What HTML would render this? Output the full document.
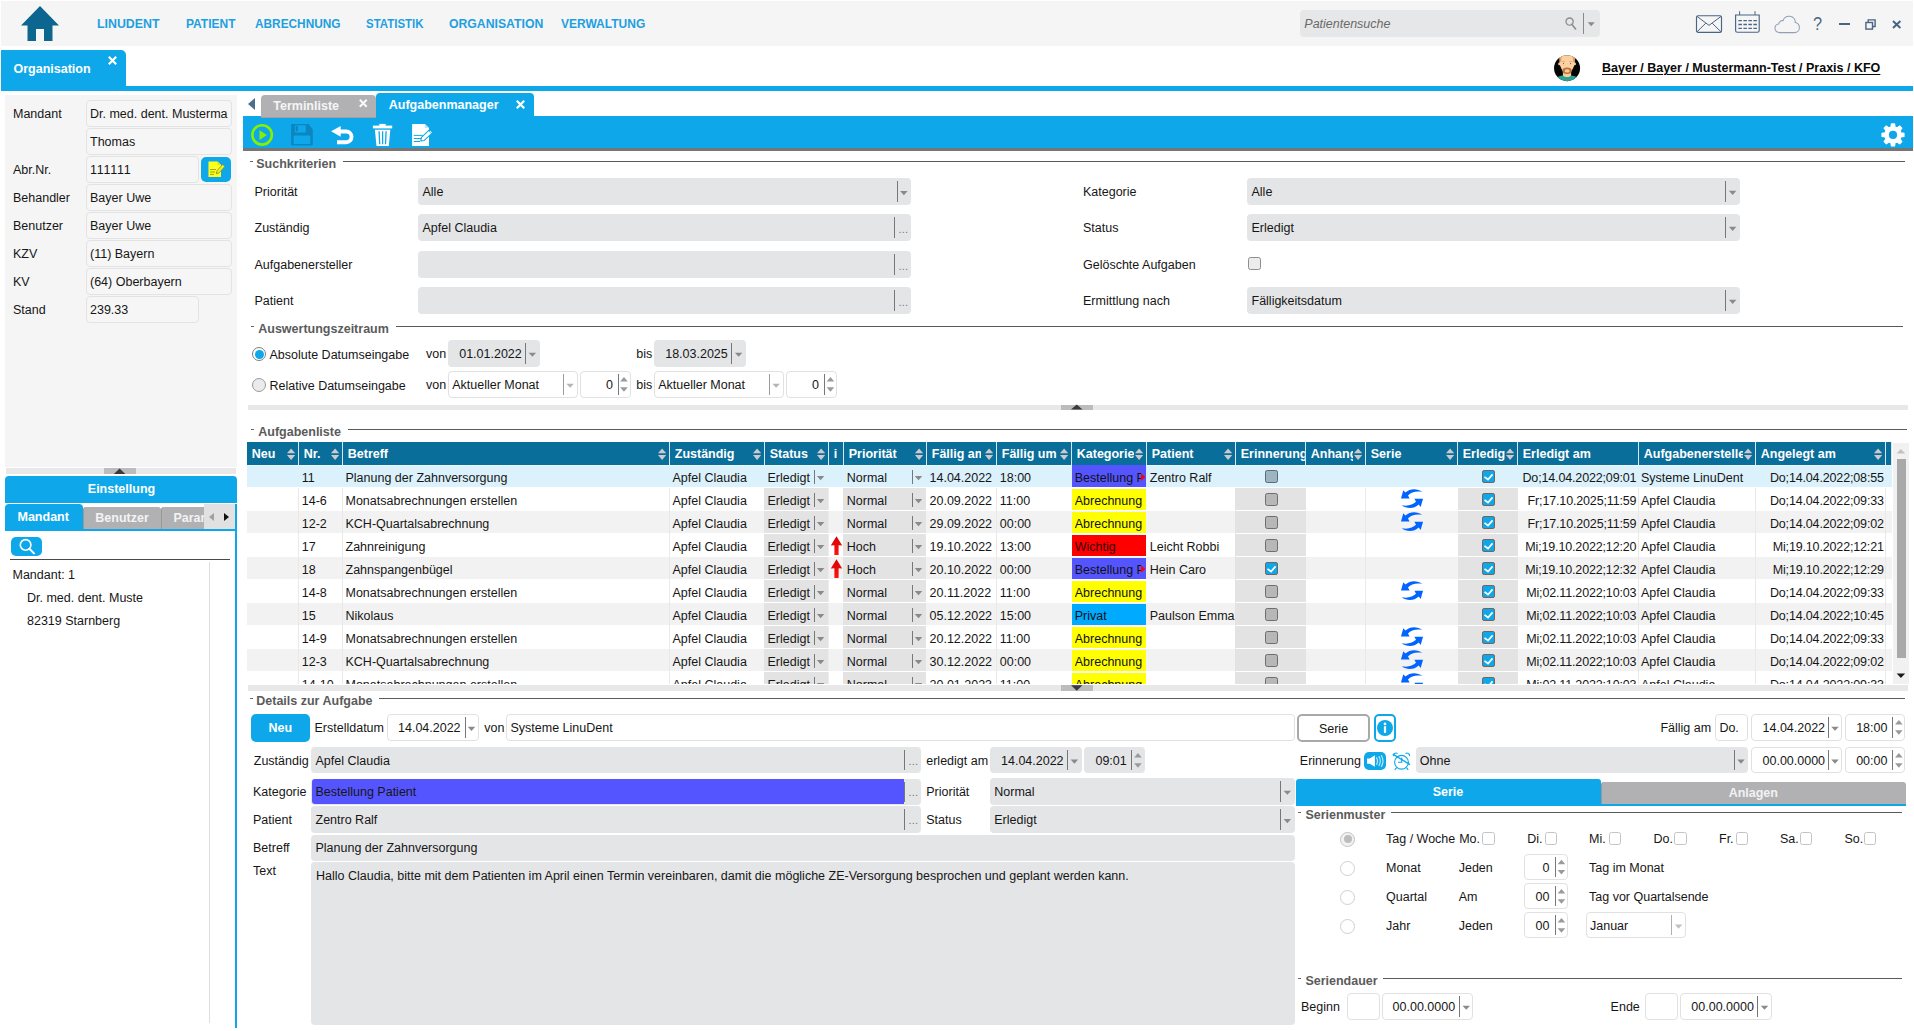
<!DOCTYPE html>
<html lang="de"><head><meta charset="utf-8"><title>LinuDent Aufgabenmanager</title><style>
html,body{margin:0;padding:0;background:#fff;}
body{width:1914px;height:1031px;position:relative;overflow:hidden;font-family:"Liberation Sans",sans-serif;font-size:12.5px;color:#161616;}
body div,body svg{position:absolute;}
.t{white-space:nowrap;line-height:16px;height:16px;}
.b{font-weight:700;}
.w{color:#fff;}
.sm{font-size:11px;font-weight:400;letter-spacing:0.2px;}
</style></head><body>
<div style="left:1px;top:1px;width:1911.5px;height:45px;background:#f5f5f5;"></div>
<svg style="left:21px;top:6px" width="38" height="35" viewBox="0 0 38 35"><path d="M19 0 L38 19.5 L31.5 19.5 L31.5 35 L23 35 L23 23 L15 23 L15 35 L6.5 35 L6.5 19.5 L0 19.5 Z" fill="#0d6690"/></svg>
<div class="t b" style="left:96.5px;top:16px;color:#1d9fe0;font-size:13px;transform-origin:0 0;transform:scaleX(0.951);">LINUDENT</div>
<div class="t b" style="left:185.5px;top:16px;color:#1d9fe0;font-size:13px;transform-origin:0 0;transform:scaleX(0.922);">PATIENT</div>
<div class="t b" style="left:254.5px;top:16px;color:#1d9fe0;font-size:13px;transform-origin:0 0;transform:scaleX(0.911);">ABRECHNUNG</div>
<div class="t b" style="left:365.7px;top:16px;color:#1d9fe0;font-size:13px;transform-origin:0 0;transform:scaleX(0.881);">STATISTIK</div>
<div class="t b" style="left:448.7px;top:16px;color:#1d9fe0;font-size:13px;transform-origin:0 0;transform:scaleX(0.941);">ORGANISATION</div>
<div class="t b" style="left:560.5px;top:16px;color:#1d9fe0;font-size:13px;transform-origin:0 0;transform:scaleX(0.923);">VERWALTUNG</div>
<div style="left:1300px;top:10px;width:299.5px;height:27px;background:#e6e7e8;border-radius:4px;"></div>
<div class="t " style="top:16px;left:1304.3px;font-style:italic;color:#6a6a6a;">Patientensuche</div>
<svg style="left:1565px;top:16.5px" width="12" height="13" viewBox="0 0 12 13"><circle cx="4.6" cy="4.6" r="3.6" fill="none" stroke="#8d8d8d" stroke-width="1.3"/><path d="M7 7.4 L10.6 12" stroke="#8d8d8d" stroke-width="1.6" stroke-linecap="round"/></svg>
<div style="left:1583px;top:13px;width:1px;height:20.5px;background:#8a8a8a;"></div>
<svg style="left:1587px;top:22px" width="8" height="5"><polygon points="0.70,0.30 7.70,0.30 4.20,4.30" fill="#8a8a8a"/></svg>
<svg style="left:1695px;top:14px" width="28" height="20" viewBox="0 0 28 20"><rect x="1.5" y="1.7" width="25" height="16.6" rx="1.6" fill="none" stroke="#4a6583" stroke-width="1.15"/><path d="M2 2.4 L14 11.4 L26 2.4 M2 17.8 L10.8 9.2 M26 17.8 L17.2 9.2" fill="none" stroke="#4a6583" stroke-width="1"/></svg>
<svg style="left:1734px;top:10px" width="27" height="24" viewBox="0 0 27 24"><path d="M1.6 5 H25.2 V20.4 Q25.2 22.2 23.4 22.2 H3.4 Q1.6 22.2 1.6 20.4 Z" fill="none" stroke="#4a6583" stroke-width="1.15"/><path d="M5.6 1.2 V5 M21 1.2 V5" stroke="#4a6583" stroke-width="1"/><path d="M4.4 10.6 H23 M4.4 14.5 H23 M4.4 18.4 H23" stroke="#4a6583" stroke-width="1.3" stroke-dasharray="3.5 1.5"/></svg>
<svg style="left:1774px;top:14.5px" width="27" height="19" viewBox="0 0 27 19"><path d="M6.2 17.6 C2.8 17.6 1 15.6 1 13.3 C1 10.9 2.9 9.3 4.7 9.1 C5 6.6 7 5.3 8.9 5.7 C10.1 2.6 13.1 1 16 1.3 C19.6 1.7 21.5 4.7 21.3 7.6 C23.8 8.2 25.4 10.3 25.4 12.7 C25.4 15.5 23.2 17.6 20.4 17.6 Z" fill="none" stroke="#8fa1b5" stroke-width="1.05"/></svg>
<div class="t" style="left:1812.5px;top:13px;color:#4a6583;font-size:18.5px;line-height:22px;height:22px;transform-origin:0 0;transform:scaleX(0.88);">?</div>
<div style="left:1839px;top:23px;width:10.5px;height:2px;background:#4a6583;"></div>
<svg style="left:1864.5px;top:18.5px" width="11" height="11" viewBox="0 0 11 11"><path d="M3.2 3 V0.9 H10.1 V7.5 H8" fill="none" stroke="#4a6583" stroke-width="1.4"/><rect x="0.9" y="3.5" width="6.6" height="6.6" fill="none" stroke="#4a6583" stroke-width="1.4"/></svg>
<svg style="left:1891.5px;top:19.5px" width="10" height="9" viewBox="0 0 10 9"><path d="M1 1 L8.4 8 M8.4 1 L1 8" stroke="#4a6583" stroke-width="2"/></svg>
<div style="left:1px;top:49.5px;width:124.5px;height:41.5px;background:#0ea8ea;border-radius:0 5px 0 0;"></div>
<div style="left:1px;top:86px;width:1912px;height:5px;background:#0ea8ea;"></div>
<div class="t b w" style="top:61px;left:13.5px;">Organisation</div>
<svg style="left:107.5px;top:56px" width="9" height="9" viewBox="0 0 9 9"><path d="M0.8 0.8 L8.2 8.2 M8.2 0.8 L0.8 8.2" stroke="#fff" stroke-width="2.2"/></svg>
<svg style="left:1550px;top:51px" width="34" height="34" viewBox="0 0 34 34"><defs><clipPath id="av"><circle cx="17.05" cy="17.15" r="13"/></clipPath></defs><g clip-path="url(#av)"><rect width="34" height="34" fill="#050505"/>
<path d="M5 31 V27.4 C8 25.4 10.5 24.6 13 24.4 H21 C23.5 24.6 26 25.4 29 27.4 V31 Z" fill="#2aa393"/>
<path d="M12.9 20 H21.1 V24.6 C19.5 26.6 14.5 26.6 12.9 24.6 Z" fill="#fbcd9a"/>
<circle cx="9.5" cy="12.9" r="1.35" fill="#f7c994"/><circle cx="24.7" cy="12.9" r="1.35" fill="#f7c994"/>
<path d="M9.6 3 H24.7 V11.6 C24.7 15.5 21.5 20.2 19.8 22 C18.4 23.3 15.8 23.3 14.4 22 C12.7 20.2 9.6 15.5 9.6 11.6 Z" fill="#fdd09d"/>
<path d="M9.6 3.6 H12.2 C11.4 6 11.3 8.6 11.2 10.8 H9.6 Z M24.7 3.6 H22.1 C22.9 6 23 8.6 23.1 10.8 H24.7 Z" fill="#dca060"/>
<path d="M10.6 15.5 C11.6 18.6 13.2 21 14.4 22 C15.8 23.3 18.4 23.3 19.8 22 C21 21 22.6 18.6 23.6 15.5 C22.6 18 21.6 19.2 20.4 20 H13.8 C12.6 19.2 11.6 18 10.6 15.5 Z" fill="#e9b078"/>
<ellipse cx="17.1" cy="19.7" rx="4.6" ry="3.3" fill="#b9753f"/><ellipse cx="17.1" cy="19.9" rx="2.5" ry="1.55" fill="#fbcd9a"/>
<path d="M12 10.6 H14.9 M19.3 10.6 H22.2" stroke="#cf9258" stroke-width="0.6"/>
<ellipse cx="13.5" cy="12.6" rx="1.25" ry="0.8" fill="#f3e6dc"/><ellipse cx="20.6" cy="12.6" rx="1.25" ry="0.8" fill="#f3e6dc"/>
<circle cx="13.5" cy="12.6" r="0.62" fill="#3b4b8c"/><circle cx="20.6" cy="12.6" r="0.62" fill="#3b4b8c"/>
</g></svg>
<div class="t b" style="top:60px;left:1602px;color:#0a0a0a;text-decoration:underline;text-decoration-thickness:1px;text-underline-offset:2px;">Bayer / Bayer / Mustermann-Test / Praxis / KFO</div>
<div style="left:5px;top:95px;width:232px;height:372px;background:#f5f5f5;"></div>
<div style="left:86px;top:100px;width:146px;height:27px;background:#f6f6f6;border:1px solid #e3e3e3;border-radius:4px;box-sizing:border-box;"></div>
<div class="t " style="top:106px;left:13px;">Mandant</div>
<div class="t " style="top:106px;left:90px;width:141px;overflow:hidden;">Dr. med. dent. Musterma</div>
<div style="left:86px;top:128px;width:146px;height:27px;background:#f6f6f6;border:1px solid #e3e3e3;border-radius:4px;box-sizing:border-box;"></div>
<div class="t " style="top:134px;left:90px;width:141px;overflow:hidden;">Thomas</div>
<div style="left:86px;top:156px;width:112.75px;height:27px;background:#f6f6f6;border:1px solid #e3e3e3;border-radius:4px;box-sizing:border-box;"></div>
<div class="t " style="top:162px;left:13px;">Abr.Nr.</div>
<div class="t " style="top:162px;left:90px;width:107.75px;overflow:hidden;letter-spacing:0.75px;">111111</div>
<div style="left:86px;top:184px;width:146px;height:27px;background:#f6f6f6;border:1px solid #e3e3e3;border-radius:4px;box-sizing:border-box;"></div>
<div class="t " style="top:190px;left:13px;">Behandler</div>
<div class="t " style="top:190px;left:90px;width:141px;overflow:hidden;">Bayer Uwe</div>
<div style="left:86px;top:212px;width:146px;height:27px;background:#f6f6f6;border:1px solid #e3e3e3;border-radius:4px;box-sizing:border-box;"></div>
<div class="t " style="top:218px;left:13px;">Benutzer</div>
<div class="t " style="top:218px;left:90px;width:141px;overflow:hidden;">Bayer Uwe</div>
<div style="left:86px;top:240px;width:146px;height:27px;background:#f6f6f6;border:1px solid #e3e3e3;border-radius:4px;box-sizing:border-box;"></div>
<div class="t " style="top:246px;left:13px;">KZV</div>
<div class="t " style="top:246px;left:90px;width:141px;overflow:hidden;">(11) Bayern</div>
<div style="left:86px;top:268px;width:146px;height:27px;background:#f6f6f6;border:1px solid #e3e3e3;border-radius:4px;box-sizing:border-box;"></div>
<div class="t " style="top:274px;left:13px;">KV</div>
<div class="t " style="top:274px;left:90px;width:141px;overflow:hidden;">(64) Oberbayern</div>
<div style="left:86px;top:296px;width:112.75px;height:27px;background:#f6f6f6;border:1px solid #e3e3e3;border-radius:4px;box-sizing:border-box;"></div>
<div class="t " style="top:302px;left:13px;">Stand</div>
<div class="t " style="top:302px;left:90px;width:107.75px;overflow:hidden;">239.33</div>
<div style="left:201.25px;top:157px;width:30px;height:25.25px;background:#0ea8ea;border-radius:5px;"></div>
<svg style="left:208px;top:161px" width="18" height="17" viewBox="0 0 18 17"><path d="M0.5 0.5 H9.5 L13 4 V16 H0.5 Z" fill="#ffff1e"/><path d="M9.5 0.5 V4 H13" fill="#e6e600"/><path d="M2 8.6 H8 M2 11 H7 M2 13.4 H6" stroke="#9aa51a" stroke-width="1"/><path d="M8.2 12.8 L9 9.8 L14.6 3.4 L16.8 5.4 L11.2 11.8 Z" fill="#f0f01a" stroke="#7d8f3a" stroke-width="0.8"/></svg>
<div style="left:6px;top:468.25px;width:230px;height:5.75px;background:#e8e8e8;"></div>
<div style="left:104px;top:468.25px;width:32px;height:5.75px;background:#bcbcbc;"></div>
<svg style="left:113px;top:468px" width="13" height="6"><polygon points="6.60,0.45 12.35,5.95 0.85,5.95" fill="#3a3a3a"/></svg>
<div style="left:5px;top:476px;width:232px;height:27px;background:#0ea8ea;border-radius:4px 4px 0 0;"></div>
<div class="t b w" style="top:481px;left:-78.5px;width:400px;text-align:center;">Einstellung</div>
<div style="left:5px;top:529px;width:232px;height:2px;background:#0ea8ea;"></div>
<div style="left:5px;top:504px;width:78px;height:27px;background:#0ea8ea;border-radius:4px 4px 0 0;"></div>
<div style="left:83px;top:507px;width:77.5px;height:22px;background:#b1b1b4;border-radius:3px 3px 0 0;border-left:1px solid #98989b;box-sizing:border-box;"></div>
<div style="left:161px;top:507px;width:74px;height:22px;background:#b1b1b4;border-radius:3px 3px 0 0;border-left:1px solid #98989b;box-sizing:border-box;"></div>
<div class="t b w" style="top:509px;left:17.5px;">Mandant</div>
<div class="t b" style="top:510px;left:95.3px;color:#f3f3f3;">Benutzer</div>
<div class="t b" style="top:510px;left:173.4px;width:31px;overflow:hidden;color:#f3f3f3;">Parameter</div>
<div style="left:204px;top:504px;width:31px;height:24.5px;background:#e1e1e1;"></div>
<div style="left:209px;top:512.5px;width:0;height:0;border-top:4.5px solid transparent;border-bottom:4.5px solid transparent;border-right:5.5px solid #a0a0a0;"></div>
<div style="left:223.5px;top:512.5px;width:0;height:0;border-top:4.5px solid transparent;border-bottom:4.5px solid transparent;border-left:5.5px solid #111;"></div>
<div style="left:235px;top:504px;width:2px;height:524px;background:#0ea8ea;"></div>
<div style="left:10.75px;top:537px;width:31.25px;height:19px;background:#0ea8ea;border-radius:5px;"></div>
<svg style="left:18px;top:538px" width="18" height="17" viewBox="0 0 18 17"><circle cx="7.6" cy="6.9" r="5.3" fill="none" stroke="#fff" stroke-width="1.6"/><path d="M11.4 10.8 L16 15.4" stroke="#fff" stroke-width="2" stroke-linecap="round"/></svg>
<div style="left:10px;top:559px;width:220px;height:1.2px;background:#4a4a4a;"></div>
<div style="left:209px;top:562px;width:1px;height:461px;background:#dedede;"></div>
<div class="t " style="top:567px;left:12.5px;">Mandant: 1</div>
<div class="t " style="top:590px;left:27px;">Dr. med. dent. Muste</div>
<div class="t " style="top:613px;left:27px;">82319 Starnberg</div>
<div style="left:248px;top:98px;width:0;height:0;border-top:6.4px solid transparent;border-bottom:6.4px solid transparent;border-right:7.5px solid #4d6d90;"></div>
<div style="left:375.75px;top:92.5px;width:157.75px;height:25px;background:#0ea8ea;border-radius:4px 4px 0 0;"></div>
<div class="t b w" style="top:97px;left:388.75px;">Aufgabenmanager</div>
<svg style="left:515.5px;top:99.5px" width="9" height="9" viewBox="0 0 9 9"><path d="M0.8 0.8 L8.2 8.2 M8.2 0.8 L0.8 8.2" stroke="#fff" stroke-width="2.2"/></svg>
<div style="left:243px;top:116px;width:1670px;height:32px;background:#0ea8ea;"></div>
<div style="left:243px;top:148px;width:1670px;height:3px;background:#767676;"></div>
<div style="left:261px;top:95px;width:115px;height:23px;background:#b1b1b4;border-radius:4px 4px 0 0;"></div>
<div style="left:261px;top:117px;width:115px;height:1px;background:#a2a2a5;"></div>
<div class="t b" style="top:98px;left:273.25px;color:#f5f5f5;">Terminliste</div>
<svg style="left:359px;top:99px" width="8.5" height="8.5" viewBox="0 0 8.5 8.5"><path d="M0.8 0.8 L7.7 7.7 M7.7 0.8 L0.8 7.7" stroke="#fafafa" stroke-width="2"/></svg>
<svg style="left:243px;top:114px" width="200" height="40" viewBox="0 0 200 40">
<circle cx="19.1" cy="20.9" r="9.7" fill="none" stroke="#86f000" stroke-width="2.6"/><path d="M16.5 16.2 L16.5 25.9 L23.9 21.05 Z" fill="#86f000"/>
<path d="M49.4 9.9 H65.6 L69.8 15.4 V30.3 Q69.8 31.6 68.5 31.6 H49.4 Q48.1 31.6 48.1 30.3 V11.2 Q48.1 9.9 49.4 9.9 Z" fill="#0c86c0"/>
<rect x="51.9" y="11.2" width="10.9" height="7.4" rx="0.8" fill="#0ea8ea"/><rect x="52.7" y="12" width="2.3" height="5.3" rx="0.8" fill="#0c86c0"/>
<rect x="50.6" y="21.4" width="16.7" height="8.5" rx="1" fill="#0ea8ea"/>
<path d="M88.1 17.3 L97.7 11.9 L97.7 22.7 Z" fill="#fff"/><path d="M97 17.5 H103.2 A5.35 5.35 0 0 1 103.2 28.2 H94" fill="none" stroke="#fff" stroke-width="3.9"/>
<rect x="129.9" y="11.6" width="19.3" height="2.8" fill="#fff"/><rect x="136.3" y="9.9" width="6.4" height="2" fill="#fff"/>
<path d="M131.9 15.7 H147.3 L145.8 31.9 H133.5 Z" fill="#fff"/>
<path d="M136.1 17.3 L136.7 30.3 M139.6 17.3 V30.3 M143.1 17.3 L142.5 30.3" stroke="#0ea8ea" stroke-width="1.3"/>
<path d="M169.1 9.9 H181.8 L186 14.1 V31.9 H169.1 Z" fill="#fff"/><path d="M181.8 9.9 V14.1 H186 Z" fill="#bfe6f8"/>
<path d="M170.8 21.4 H179.7 M170.8 24.5 H179 M170.8 27.5 H177" stroke="#0ea8ea" stroke-width="1"/>
<path d="M177.8 26.9 L178.42 23.35 L186.87 15.46 L189.73 18.54 L181.28 26.43 Z" fill="#fff" stroke="#0ea8ea" stroke-width="1.1" stroke-linejoin="round"/>
<path d="M185.55 16.69 L188.41 19.77" stroke="#0ea8ea" stroke-width="0.8"/>
</svg>
<svg style="left:1879px;top:121px" width="28" height="28" viewBox="0 0 28 28"><path d="M12.02 5.94 L12.44 2.91 L15.56 2.91 L15.98 5.94 L18.23 6.87 L20.66 5.02 L22.88 7.24 L21.03 9.67 L21.96 11.92 L24.99 12.34 L24.99 15.46 L21.96 15.88 L21.03 18.13 L22.88 20.56 L20.66 22.78 L18.23 20.93 L15.98 21.86 L15.56 24.89 L12.44 24.89 L12.02 21.86 L9.77 20.93 L7.34 22.78 L5.12 20.56 L6.97 18.13 L6.04 15.88 L3.01 15.46 L3.01 12.34 L6.04 11.92 L6.97 9.67 L5.12 7.24 L7.34 5.02 L9.77 6.87 Z" fill="#fff" stroke="#fff" stroke-width="1.2" stroke-linejoin="round"/><circle cx="14" cy="13.9" r="4.1" fill="#0ea8ea"/></svg>
<div style="left:249.5px;top:161.25px;width:3px;height:1px;background:#666;"></div>
<div class="t b" style="top:156px;left:256.25px;color:#5b5b5b;">Suchkriterien</div>
<div style="left:342.5px;top:161.25px;width:1562.2px;height:1.2px;background:#5a5a5a;"></div>
<div class="t " style="top:184px;left:254.5px;">Priorität</div>
<div style="left:418.25px;top:178.25px;width:493px;height:26.75px;background:#e4e5e7;border-radius:4px;"></div>
<div style="left:896.5px;top:181.25px;width:1px;height:20.75px;background:#777;"></div>
<svg style="left:900px;top:191px" width="8" height="5"><polygon points="0.12,0.03 7.62,0.03 3.88,4.23" fill="#8a8a8a"/></svg>
<div class="t " style="top:184px;left:422.5px;">Alle</div>
<div class="t " style="top:220px;left:254.5px;">Zuständig</div>
<div style="left:418.25px;top:214.25px;width:493px;height:26.75px;background:#e4e5e7;border-radius:4px;"></div>
<div style="left:894.25px;top:217.25px;width:1px;height:20.75px;background:#777;"></div>
<div class="t sm" style="top:221px;left:703.4px;width:400px;text-align:center;color:#777;">...</div>
<div class="t " style="top:220px;left:422.5px;">Apfel Claudia</div>
<div class="t " style="top:257px;left:254.5px;">Aufgabenersteller</div>
<div style="left:418.25px;top:251.25px;width:493px;height:26.75px;background:#e4e5e7;border-radius:4px;"></div>
<div style="left:894.25px;top:254.25px;width:1px;height:20.75px;background:#777;"></div>
<div class="t sm" style="top:258px;left:703.4px;width:400px;text-align:center;color:#777;">...</div>
<div class="t " style="top:293px;left:254.5px;">Patient</div>
<div style="left:418.25px;top:287px;width:493px;height:26.75px;background:#e4e5e7;border-radius:4px;"></div>
<div style="left:894.25px;top:290px;width:1px;height:20.75px;background:#777;"></div>
<div class="t sm" style="top:294px;left:703.4px;width:400px;text-align:center;color:#777;">...</div>
<div class="t " style="top:184px;left:1083px;">Kategorie</div>
<div style="left:1247.25px;top:178px;width:492.75px;height:26.75px;background:#e4e5e7;border-radius:4px;"></div>
<div style="left:1725.25px;top:181px;width:1px;height:20.75px;background:#777;"></div>
<svg style="left:1728px;top:190px" width="9" height="5"><polygon points="0.88,0.78 8.38,0.78 4.62,4.98" fill="#8a8a8a"/></svg>
<div class="t " style="top:184px;left:1251.5px;">Alle</div>
<div class="t " style="top:220px;left:1083px;">Status</div>
<div style="left:1247.25px;top:214px;width:492.75px;height:26.75px;background:#e4e5e7;border-radius:4px;"></div>
<div style="left:1725.25px;top:217px;width:1px;height:20.75px;background:#777;"></div>
<svg style="left:1728px;top:226px" width="9" height="5"><polygon points="0.88,0.78 8.38,0.78 4.62,4.98" fill="#8a8a8a"/></svg>
<div class="t " style="top:220px;left:1251.5px;">Erledigt</div>
<div class="t " style="top:293px;left:1083px;">Ermittlung nach</div>
<div style="left:1247.25px;top:287px;width:492.75px;height:26.75px;background:#e4e5e7;border-radius:4px;"></div>
<div style="left:1725.25px;top:290px;width:1px;height:20.75px;background:#777;"></div>
<svg style="left:1728px;top:299px" width="9" height="5"><polygon points="0.88,0.77 8.38,0.77 4.62,4.97" fill="#8a8a8a"/></svg>
<div class="t " style="top:293px;left:1251.5px;">Fälligkeitsdatum</div>
<div class="t " style="top:257px;left:1083px;">Gelöschte Aufgaben</div>
<div style="left:1248px;top:257px;width:13px;height:13px;background:#ececec;border:1px solid #8e8e8e;border-radius:2.5px;box-sizing:border-box;"></div>
<div style="left:251px;top:326px;width:3px;height:1px;background:#666;"></div>
<div class="t b" style="top:321px;left:258.25px;color:#5b5b5b;">Auswertungszeitraum</div>
<div style="left:395.5px;top:326px;width:1507.5px;height:1.2px;background:#5a5a5a;"></div>
<div style="left:252px;top:347px;width:14.25px;height:14.25px;background:#fff;border:1.2px solid #7d7d7d;border-radius:50%;box-sizing:border-box;"></div>
<div style="left:254.6px;top:349.6px;width:9px;height:9px;background:#0ea8ea;border-radius:50%;"></div>
<div class="t " style="top:347px;left:269.5px;">Absolute Datumseingabe</div>
<div class="t " style="top:346px;left:426px;">von</div>
<div style="left:448px;top:340px;width:91.75px;height:26.5px;background:#e4e5e7;border-radius:4px;"></div>
<div style="left:525px;top:343px;width:1px;height:20.5px;background:#777;"></div>
<svg style="left:528px;top:352px" width="9" height="5"><polygon points="0.62,0.65 8.12,0.65 4.38,4.85" fill="#8a8a8a"/></svg>
<div class="t " style="top:346px;left:459.2px;">01.01.2022</div>
<div class="t " style="top:346px;left:636.3px;">bis</div>
<div style="left:654px;top:340px;width:92px;height:26.5px;background:#e4e5e7;border-radius:4px;"></div>
<div style="left:731.25px;top:343px;width:1px;height:20.5px;background:#777;"></div>
<svg style="left:734px;top:352px" width="9" height="5"><polygon points="0.88,0.65 8.38,0.65 4.62,4.85" fill="#8a8a8a"/></svg>
<div class="t " style="top:346px;left:665.2px;">18.03.2025</div>
<div style="left:252px;top:378.2px;width:14.25px;height:14.25px;background:#ebebeb;border:1.2px solid #9a9a9a;border-radius:50%;box-sizing:border-box;"></div>
<div class="t " style="top:378px;left:269.5px;">Relative Datumseingabe</div>
<div class="t " style="top:377px;left:426px;">von</div>
<div style="left:448px;top:371px;width:129.5px;height:26.5px;background:#fff;border:1px solid #e1e1e1;border-radius:4px;box-sizing:border-box;"></div>
<div style="left:562.75px;top:374px;width:1px;height:20.5px;background:#9c9c9c;"></div>
<svg style="left:566px;top:383px" width="8" height="5"><polygon points="0.38,0.65 7.88,0.65 4.12,4.85" fill="#b5b5b5"/></svg>
<div class="t " style="top:377px;left:452.2px;">Aktueller Monat</div>
<div style="left:580px;top:371px;width:50.5px;height:26.5px;background:#fff;border:1px solid #e1e1e1;border-radius:4px;box-sizing:border-box;"></div>
<div style="left:617.5px;top:374px;width:1px;height:20.5px;background:#777;"></div>
<svg style="left:620px;top:377px" width="8" height="5"><polygon points="3.95,0.05 7.75,4.45 0.15,4.45" fill="#9a9a9a"/></svg>
<svg style="left:620px;top:387px" width="8" height="5"><polygon points="0.15,0.35 7.75,0.35 3.95,4.75" fill="#9a9a9a"/></svg>
<div class="t " style="top:377px;right:1301px;">0</div>
<div class="t " style="top:377px;left:636.3px;">bis</div>
<div style="left:654px;top:371px;width:129.5px;height:26.5px;background:#fff;border:1px solid #e1e1e1;border-radius:4px;box-sizing:border-box;"></div>
<div style="left:768.75px;top:374px;width:1px;height:20.5px;background:#9c9c9c;"></div>
<svg style="left:772px;top:383px" width="8" height="5"><polygon points="0.38,0.65 7.88,0.65 4.12,4.85" fill="#b5b5b5"/></svg>
<div class="t " style="top:377px;left:658.2px;">Aktueller Monat</div>
<div style="left:786px;top:371px;width:51px;height:26.5px;background:#fff;border:1px solid #e1e1e1;border-radius:4px;box-sizing:border-box;"></div>
<div style="left:824px;top:374px;width:1px;height:20.5px;background:#777;"></div>
<svg style="left:826px;top:377px" width="9" height="5"><polygon points="4.45,0.05 8.25,4.45 0.65,4.45" fill="#9a9a9a"/></svg>
<svg style="left:826px;top:387px" width="9" height="5"><polygon points="0.65,0.35 8.25,0.35 4.45,4.75" fill="#9a9a9a"/></svg>
<div class="t " style="top:377px;right:1095px;">0</div>
<div style="left:248px;top:404.5px;width:1660px;height:5px;background:#e8e8e8;"></div>
<div style="left:1061px;top:404.5px;width:32px;height:5px;background:#bcbcbc;"></div>
<svg style="left:1071px;top:404px" width="12" height="6"><polygon points="5.75,0.50 11.50,5.50 0.00,5.50" fill="#3a3a3a"/></svg>
<div style="left:251px;top:429px;width:3px;height:1px;background:#666;"></div>
<div class="t b" style="top:424px;left:258.25px;color:#5b5b5b;">Aufgabenliste</div>
<div style="left:347.5px;top:429px;width:1559.2px;height:1.2px;background:#5a5a5a;"></div>
<div class="tbl" style="left:247px;top:442px;width:1645px;height:242px;overflow:hidden;"><div style="left:0px;top:0px;width:1645px;height:23px;background:#d6e7ef;"></div><div style="left:0px;top:0px;width:51px;height:23px;background:#0a6e9b;"></div><div class="t b w" style="top:4px;left:4.75px;width:34px;overflow:hidden;">Neu</div><svg style="left:40px;top:6px" width="9" height="6"><polygon points="4.10,0.50 8.20,5.30 0.00,5.30" fill="#cbcbcb"/></svg><svg style="left:40px;top:13px" width="9" height="5"><polygon points="0.00,0.10 8.20,0.10 4.10,4.90" fill="#cbcbcb"/></svg><div style="left:52px;top:0px;width:43px;height:23px;background:#0a6e9b;"></div><div class="t b w" style="top:4px;left:56.75px;width:26px;overflow:hidden;">Nr.</div><svg style="left:84px;top:6px" width="9" height="6"><polygon points="4.10,0.50 8.20,5.30 0.00,5.30" fill="#cbcbcb"/></svg><svg style="left:84px;top:13px" width="9" height="5"><polygon points="0.00,0.10 8.20,0.10 4.10,4.90" fill="#cbcbcb"/></svg><div style="left:96px;top:0px;width:326px;height:23px;background:#0a6e9b;"></div><div class="t b w" style="top:4px;left:100.75px;width:309px;overflow:hidden;">Betreff</div><svg style="left:411px;top:6px" width="9" height="6"><polygon points="4.10,0.50 8.20,5.30 0.00,5.30" fill="#cbcbcb"/></svg><svg style="left:411px;top:13px" width="9" height="5"><polygon points="0.00,0.10 8.20,0.10 4.10,4.90" fill="#cbcbcb"/></svg><div style="left:423px;top:0px;width:94px;height:23px;background:#0a6e9b;"></div><div class="t b w" style="top:4px;left:427.75px;width:77px;overflow:hidden;">Zuständig</div><svg style="left:506px;top:6px" width="9" height="6"><polygon points="4.10,0.50 8.20,5.30 0.00,5.30" fill="#cbcbcb"/></svg><svg style="left:506px;top:13px" width="9" height="5"><polygon points="0.00,0.10 8.20,0.10 4.10,4.90" fill="#cbcbcb"/></svg><div style="left:518px;top:0px;width:63px;height:23px;background:#0a6e9b;"></div><div class="t b w" style="top:4px;left:522.75px;width:46px;overflow:hidden;">Status</div><svg style="left:570px;top:6px" width="9" height="6"><polygon points="4.10,0.50 8.20,5.30 0.00,5.30" fill="#cbcbcb"/></svg><svg style="left:570px;top:13px" width="9" height="5"><polygon points="0.00,0.10 8.20,0.10 4.10,4.90" fill="#cbcbcb"/></svg><div style="left:582px;top:0px;width:14px;height:23px;background:#0a6e9b;"></div><div class="t b w" style="top:4px;left:586.75px;">i</div><div style="left:597px;top:0px;width:82px;height:23px;background:#0a6e9b;"></div><div class="t b w" style="top:4px;left:601.75px;width:65px;overflow:hidden;">Priorität</div><svg style="left:668px;top:6px" width="9" height="6"><polygon points="4.10,0.50 8.20,5.30 0.00,5.30" fill="#cbcbcb"/></svg><svg style="left:668px;top:13px" width="9" height="5"><polygon points="0.00,0.10 8.20,0.10 4.10,4.90" fill="#cbcbcb"/></svg><div style="left:680px;top:0px;width:69px;height:23px;background:#0a6e9b;"></div><div class="t b w" style="top:4px;left:684.75px;width:49px;overflow:hidden;">Fällig am</div><svg style="left:738px;top:6px" width="9" height="6"><polygon points="4.10,0.50 8.20,5.30 0.00,5.30" fill="#cbcbcb"/></svg><svg style="left:738px;top:13px" width="9" height="5"><polygon points="0.00,0.10 8.20,0.10 4.10,4.90" fill="#cbcbcb"/></svg><div style="left:750px;top:0px;width:74px;height:23px;background:#0a6e9b;"></div><div class="t b w" style="top:4px;left:754.75px;width:57px;overflow:hidden;">Fällig um</div><svg style="left:813px;top:6px" width="9" height="6"><polygon points="4.10,0.50 8.20,5.30 0.00,5.30" fill="#cbcbcb"/></svg><svg style="left:813px;top:13px" width="9" height="5"><polygon points="0.00,0.10 8.20,0.10 4.10,4.90" fill="#cbcbcb"/></svg><div style="left:825px;top:0px;width:74px;height:23px;background:#0a6e9b;"></div><div class="t b w" style="top:4px;left:829.75px;width:57px;overflow:hidden;">Kategorie</div><svg style="left:888px;top:6px" width="9" height="6"><polygon points="4.10,0.50 8.20,5.30 0.00,5.30" fill="#cbcbcb"/></svg><svg style="left:888px;top:13px" width="9" height="5"><polygon points="0.00,0.10 8.20,0.10 4.10,4.90" fill="#cbcbcb"/></svg><div style="left:900px;top:0px;width:88px;height:23px;background:#0a6e9b;"></div><div class="t b w" style="top:4px;left:904.75px;width:71px;overflow:hidden;">Patient</div><svg style="left:977px;top:6px" width="9" height="6"><polygon points="4.10,0.50 8.20,5.30 0.00,5.30" fill="#cbcbcb"/></svg><svg style="left:977px;top:13px" width="9" height="5"><polygon points="0.00,0.10 8.20,0.10 4.10,4.90" fill="#cbcbcb"/></svg><div style="left:989px;top:0px;width:69px;height:23px;background:#0a6e9b;"></div><div class="t b w" style="top:4px;left:993.75px;width:64.5px;overflow:hidden;">Erinnerung</div><div style="left:1059px;top:0px;width:59px;height:23px;background:#0a6e9b;"></div><div class="t b w" style="top:4px;left:1063.75px;width:42px;overflow:hidden;">Anhang</div><svg style="left:1107px;top:6px" width="9" height="6"><polygon points="4.10,0.50 8.20,5.30 0.00,5.30" fill="#cbcbcb"/></svg><svg style="left:1107px;top:13px" width="9" height="5"><polygon points="0.00,0.10 8.20,0.10 4.10,4.90" fill="#cbcbcb"/></svg><div style="left:1119px;top:0px;width:91px;height:23px;background:#0a6e9b;"></div><div class="t b w" style="top:4px;left:1123.75px;width:74px;overflow:hidden;">Serie</div><svg style="left:1199px;top:6px" width="9" height="6"><polygon points="4.10,0.50 8.20,5.30 0.00,5.30" fill="#cbcbcb"/></svg><svg style="left:1199px;top:13px" width="9" height="5"><polygon points="0.00,0.10 8.20,0.10 4.10,4.90" fill="#cbcbcb"/></svg><div style="left:1211px;top:0px;width:59px;height:23px;background:#0a6e9b;"></div><div class="t b w" style="top:4px;left:1215.75px;width:42px;overflow:hidden;">Erledigt</div><svg style="left:1259px;top:6px" width="9" height="6"><polygon points="4.10,0.50 8.20,5.30 0.00,5.30" fill="#cbcbcb"/></svg><svg style="left:1259px;top:13px" width="9" height="5"><polygon points="0.00,0.10 8.20,0.10 4.10,4.90" fill="#cbcbcb"/></svg><div style="left:1271px;top:0px;width:120px;height:23px;background:#0a6e9b;"></div><div class="t b w" style="top:4px;left:1275.75px;width:115px;overflow:hidden;">Erledigt am</div><div style="left:1392px;top:0px;width:116px;height:23px;background:#0a6e9b;"></div><div class="t b w" style="top:4px;left:1396.75px;width:99px;overflow:hidden;">Aufgabenersteller</div><svg style="left:1497px;top:6px" width="9" height="6"><polygon points="4.10,0.50 8.20,5.30 0.00,5.30" fill="#cbcbcb"/></svg><svg style="left:1497px;top:13px" width="9" height="5"><polygon points="0.00,0.10 8.20,0.10 4.10,4.90" fill="#cbcbcb"/></svg><div style="left:1509px;top:0px;width:129px;height:23px;background:#0a6e9b;"></div><div class="t b w" style="top:4px;left:1513.75px;width:112px;overflow:hidden;">Angelegt am</div><svg style="left:1627px;top:6px" width="9" height="6"><polygon points="4.10,0.50 8.20,5.30 0.00,5.30" fill="#cbcbcb"/></svg><svg style="left:1627px;top:13px" width="9" height="5"><polygon points="0.00,0.10 8.20,0.10 4.10,4.90" fill="#cbcbcb"/></svg><div style="left:1639px;top:0px;width:5px;height:23px;background:#0a6e9b;"></div><div style="left:0px;top:23px;width:1645px;height:22px;background:#dbf1fb;"></div><div style="left:0px;top:23px;width:1645px;height:1px;background:#e8f8ff;"></div><div class="t " style="top:28px;left:54.75px;">11</div><div class="t " style="top:28px;left:98.5px;">Planung der Zahnversorgung</div><div class="t " style="top:28px;left:425.5px;">Apfel Claudia</div><div class="t " style="top:28px;left:520.5px;">Erledigt</div><div style="left:567px;top:28px;width:1px;height:14px;background:#777;"></div><svg style="left:569px;top:34px" width="9" height="5"><polygon points="0.85,0.10 8.35,0.10 4.60,4.30" fill="#8a8a8a"/></svg><div class="t " style="top:28px;left:599.75px;">Normal</div><div style="left:665px;top:28px;width:1px;height:14px;background:#777;"></div><svg style="left:667px;top:34px" width="9" height="5"><polygon points="0.75,0.10 8.25,0.10 4.50,4.30" fill="#8a8a8a"/></svg><div class="t " style="top:28px;left:682.5px;">14.04.2022</div><div class="t " style="top:28px;left:752.75px;">18:00</div><div style="left:825px;top:23px;width:74px;height:22px;background:#5555ff;"></div><div class="t " style="top:28px;left:827.75px;width:66.5px;overflow:hidden;color:#111;">Bestellung Patient</div><svg style="left:894px;top:31px" width="5" height="8"><polygon points="0,0.2 4.4,4 0,7.8" fill="#ff0000"/></svg><div class="t " style="top:28px;left:902.75px;">Zentro Ralf</div><svg style="left:1018px;top:28px" width="13" height="13" viewBox="0 0 13 13"><rect x="0.5" y="0.5" width="12" height="12" rx="1.8" fill="#9eb4c1" stroke="#566d7a" stroke-width="1"/></svg><svg style="left:1235px;top:28px" width="13" height="13" viewBox="0 0 13 13"><rect x="0.5" y="0.5" width="12" height="12" rx="1.6" fill="#0ea8ea" stroke="#76635d" stroke-width="1"/><path d="M2.5 6.9 L6 9.5 L10.6 4.4" fill="none" stroke="#fff" stroke-width="1.7"/></svg><div class="t " style="top:28px;right:255.6px;letter-spacing:-0.15px;">Do;14.04.2022;09:01</div><div class="t " style="top:28px;left:1394px;">Systeme LinuDent</div><div class="t " style="top:28px;right:8.2px;letter-spacing:-0.15px;">Do;14.04.2022;08:55</div><div style="left:0px;top:46px;width:1645px;height:22px;background:#ffffff;"></div><div style="left:51px;top:46px;width:1px;height:23px;background:#e9e9e9;"></div><div style="left:95px;top:46px;width:1px;height:23px;background:#e9e9e9;"></div><div style="left:422px;top:46px;width:1px;height:23px;background:#e9e9e9;"></div><div style="left:749px;top:46px;width:1px;height:23px;background:#e9e9e9;"></div><div style="left:988px;top:46px;width:1px;height:23px;background:#e9e9e9;"></div><div style="left:1118px;top:46px;width:1px;height:23px;background:#e9e9e9;"></div><div style="left:1391px;top:46px;width:1px;height:23px;background:#e9e9e9;"></div><div style="left:1508px;top:46px;width:1px;height:23px;background:#e9e9e9;"></div><div style="left:1638px;top:46px;width:1px;height:23px;background:#e9e9e9;"></div><div style="left:517px;top:46px;width:64px;height:22px;background:#e3e3e3;"></div><div style="left:581px;top:46px;width:1px;height:22px;background:#ececec;"></div><div style="left:596px;top:46px;width:83px;height:22px;background:#e3e3e3;"></div><div style="left:988px;top:46px;width:70.5px;height:22px;background:#e3e3e3;"></div><div style="left:1211px;top:46px;width:60px;height:22px;background:#e3e3e3;"></div><div class="t " style="top:51px;left:54.75px;">14-6</div><div class="t " style="top:51px;left:98.5px;">Monatsabrechnungen erstellen</div><div class="t " style="top:51px;left:425.5px;">Apfel Claudia</div><div class="t " style="top:51px;left:520.5px;">Erledigt</div><div style="left:567px;top:51px;width:1px;height:14px;background:#777;"></div><svg style="left:569px;top:57px" width="9" height="5"><polygon points="0.85,0.10 8.35,0.10 4.60,4.30" fill="#8a8a8a"/></svg><div class="t " style="top:51px;left:599.75px;">Normal</div><div style="left:665px;top:51px;width:1px;height:14px;background:#777;"></div><svg style="left:667px;top:57px" width="9" height="5"><polygon points="0.75,0.10 8.25,0.10 4.50,4.30" fill="#8a8a8a"/></svg><div class="t " style="top:51px;left:682.5px;">20.09.2022</div><div class="t " style="top:51px;left:752.75px;">11:00</div><div style="left:825px;top:47px;width:74px;height:21px;background:#ffff00;"></div><div class="t " style="top:51px;left:827.75px;width:72px;overflow:hidden;color:#111;">Abrechnung</div><svg style="left:1018px;top:51px" width="13" height="13" viewBox="0 0 13 13"><rect x="0.5" y="0.5" width="12" height="12" rx="1.8" fill="#b7b7b7" stroke="#6e6e6e" stroke-width="1"/></svg><svg style="left:1145px;top:44px" width="40" height="26" viewBox="0 0 40 26"><g fill="#0064ff"><path id="sa" d="M11.35 4.2 L8.95 12.4 L17.6 12.4 L16 9.4 C19 6.5 24 4.6 30.2 5.9 C26 2.6 18.5 1.6 13.3 6.6 Z"/><path d="M11.35 4.2 L8.95 12.4 L17.6 12.4 L16 9.4 C19 6.5 24 4.6 30.2 5.9 C26 2.6 18.5 1.6 13.3 6.6 Z" transform="rotate(180 20 12.6)"/></g></svg><svg style="left:1235px;top:51px" width="13" height="13" viewBox="0 0 13 13"><rect x="0.5" y="0.5" width="12" height="12" rx="1.6" fill="#0ea8ea" stroke="#76635d" stroke-width="1"/><path d="M2.5 6.9 L6 9.5 L10.6 4.4" fill="none" stroke="#fff" stroke-width="1.7"/></svg><div class="t " style="top:51px;right:255.6px;letter-spacing:-0.15px;">Fr;17.10.2025;11:59</div><div class="t " style="top:51px;left:1394px;">Apfel Claudia</div><div class="t " style="top:51px;right:8.2px;letter-spacing:-0.15px;">Do;14.04.2022;09:33</div><div style="left:0px;top:69px;width:1645px;height:22px;background:#f2f2f2;"></div><div style="left:51px;top:69px;width:1px;height:23px;background:#e9e9e9;"></div><div style="left:95px;top:69px;width:1px;height:23px;background:#e9e9e9;"></div><div style="left:422px;top:69px;width:1px;height:23px;background:#e9e9e9;"></div><div style="left:749px;top:69px;width:1px;height:23px;background:#e9e9e9;"></div><div style="left:988px;top:69px;width:1px;height:23px;background:#e9e9e9;"></div><div style="left:1118px;top:69px;width:1px;height:23px;background:#e9e9e9;"></div><div style="left:1391px;top:69px;width:1px;height:23px;background:#e9e9e9;"></div><div style="left:1508px;top:69px;width:1px;height:23px;background:#e9e9e9;"></div><div style="left:1638px;top:69px;width:1px;height:23px;background:#e9e9e9;"></div><div style="left:517px;top:69px;width:64px;height:22px;background:#e3e3e3;"></div><div style="left:581px;top:69px;width:1px;height:22px;background:#ececec;"></div><div style="left:596px;top:69px;width:83px;height:22px;background:#e3e3e3;"></div><div style="left:988px;top:69px;width:70.5px;height:22px;background:#e3e3e3;"></div><div style="left:1211px;top:69px;width:60px;height:22px;background:#e3e3e3;"></div><div class="t " style="top:74px;left:54.75px;">12-2</div><div class="t " style="top:74px;left:98.5px;">KCH-Quartalsabrechnung</div><div class="t " style="top:74px;left:425.5px;">Apfel Claudia</div><div class="t " style="top:74px;left:520.5px;">Erledigt</div><div style="left:567px;top:74px;width:1px;height:14px;background:#777;"></div><svg style="left:569px;top:80px" width="9" height="5"><polygon points="0.85,0.10 8.35,0.10 4.60,4.30" fill="#8a8a8a"/></svg><div class="t " style="top:74px;left:599.75px;">Normal</div><div style="left:665px;top:74px;width:1px;height:14px;background:#777;"></div><svg style="left:667px;top:80px" width="9" height="5"><polygon points="0.75,0.10 8.25,0.10 4.50,4.30" fill="#8a8a8a"/></svg><div class="t " style="top:74px;left:682.5px;">29.09.2022</div><div class="t " style="top:74px;left:752.75px;">00:00</div><div style="left:825px;top:70px;width:74px;height:21px;background:#ffff00;"></div><div class="t " style="top:74px;left:827.75px;width:72px;overflow:hidden;color:#111;">Abrechnung</div><svg style="left:1018px;top:74px" width="13" height="13" viewBox="0 0 13 13"><rect x="0.5" y="0.5" width="12" height="12" rx="1.8" fill="#b7b7b7" stroke="#6e6e6e" stroke-width="1"/></svg><svg style="left:1145px;top:67px" width="40" height="26" viewBox="0 0 40 26"><g fill="#0064ff"><path id="sa" d="M11.35 4.2 L8.95 12.4 L17.6 12.4 L16 9.4 C19 6.5 24 4.6 30.2 5.9 C26 2.6 18.5 1.6 13.3 6.6 Z"/><path d="M11.35 4.2 L8.95 12.4 L17.6 12.4 L16 9.4 C19 6.5 24 4.6 30.2 5.9 C26 2.6 18.5 1.6 13.3 6.6 Z" transform="rotate(180 20 12.6)"/></g></svg><svg style="left:1235px;top:74px" width="13" height="13" viewBox="0 0 13 13"><rect x="0.5" y="0.5" width="12" height="12" rx="1.6" fill="#0ea8ea" stroke="#76635d" stroke-width="1"/><path d="M2.5 6.9 L6 9.5 L10.6 4.4" fill="none" stroke="#fff" stroke-width="1.7"/></svg><div class="t " style="top:74px;right:255.6px;letter-spacing:-0.15px;">Fr;17.10.2025;11:59</div><div class="t " style="top:74px;left:1394px;">Apfel Claudia</div><div class="t " style="top:74px;right:8.2px;letter-spacing:-0.15px;">Do;14.04.2022;09:02</div><div style="left:0px;top:92px;width:1645px;height:22px;background:#ffffff;"></div><div style="left:51px;top:92px;width:1px;height:23px;background:#e9e9e9;"></div><div style="left:95px;top:92px;width:1px;height:23px;background:#e9e9e9;"></div><div style="left:422px;top:92px;width:1px;height:23px;background:#e9e9e9;"></div><div style="left:749px;top:92px;width:1px;height:23px;background:#e9e9e9;"></div><div style="left:988px;top:92px;width:1px;height:23px;background:#e9e9e9;"></div><div style="left:1118px;top:92px;width:1px;height:23px;background:#e9e9e9;"></div><div style="left:1391px;top:92px;width:1px;height:23px;background:#e9e9e9;"></div><div style="left:1508px;top:92px;width:1px;height:23px;background:#e9e9e9;"></div><div style="left:1638px;top:92px;width:1px;height:23px;background:#e9e9e9;"></div><div style="left:517px;top:92px;width:64px;height:22px;background:#e3e3e3;"></div><div style="left:581px;top:92px;width:1px;height:22px;background:#ececec;"></div><div style="left:596px;top:92px;width:83px;height:22px;background:#e3e3e3;"></div><div style="left:988px;top:92px;width:70.5px;height:22px;background:#e3e3e3;"></div><div style="left:1211px;top:92px;width:60px;height:22px;background:#e3e3e3;"></div><div class="t " style="top:97px;left:54.75px;">17</div><div class="t " style="top:97px;left:98.5px;">Zahnreinigung</div><div class="t " style="top:97px;left:425.5px;">Apfel Claudia</div><div class="t " style="top:97px;left:520.5px;">Erledigt</div><div style="left:567px;top:97px;width:1px;height:14px;background:#777;"></div><svg style="left:569px;top:103px" width="9" height="5"><polygon points="0.85,0.10 8.35,0.10 4.60,4.30" fill="#8a8a8a"/></svg><div class="t " style="top:97px;left:599.75px;">Hoch</div><div style="left:665px;top:97px;width:1px;height:14px;background:#777;"></div><svg style="left:667px;top:103px" width="9" height="5"><polygon points="0.75,0.10 8.25,0.10 4.50,4.30" fill="#8a8a8a"/></svg><svg style="left:582px;top:93px" width="15" height="21" viewBox="0 0 15 21"><defs><linearGradient id="rg3" x1="0" y1="0" x2="0" y2="1"><stop offset="0" stop-color="#d80000"/><stop offset="1" stop-color="#ff1212"/></linearGradient></defs><path d="M7.5 1.2 L13.2 10.6 L9.6 10.2 L9.6 20 L5.4 20 L5.4 10.2 L1.8 10.6 Z" fill="url(#rg3)"/></svg><div class="t " style="top:97px;left:682.5px;">19.10.2022</div><div class="t " style="top:97px;left:752.75px;">13:00</div><div style="left:825px;top:93px;width:74px;height:21px;background:#ff0000;"></div><div class="t " style="top:97px;left:827.75px;width:72px;overflow:hidden;color:#300;">Wichtig</div><div class="t " style="top:97px;left:902.75px;">Leicht Robbi</div><svg style="left:1018px;top:97px" width="13" height="13" viewBox="0 0 13 13"><rect x="0.5" y="0.5" width="12" height="12" rx="1.8" fill="#b7b7b7" stroke="#6e6e6e" stroke-width="1"/></svg><svg style="left:1235px;top:97px" width="13" height="13" viewBox="0 0 13 13"><rect x="0.5" y="0.5" width="12" height="12" rx="1.6" fill="#0ea8ea" stroke="#76635d" stroke-width="1"/><path d="M2.5 6.9 L6 9.5 L10.6 4.4" fill="none" stroke="#fff" stroke-width="1.7"/></svg><div class="t " style="top:97px;right:255.6px;letter-spacing:-0.15px;">Mi;19.10.2022;12:20</div><div class="t " style="top:97px;left:1394px;">Apfel Claudia</div><div class="t " style="top:97px;right:8.2px;letter-spacing:-0.15px;">Mi;19.10.2022;12:21</div><div style="left:0px;top:115px;width:1645px;height:22px;background:#f2f2f2;"></div><div style="left:51px;top:115px;width:1px;height:23px;background:#e9e9e9;"></div><div style="left:95px;top:115px;width:1px;height:23px;background:#e9e9e9;"></div><div style="left:422px;top:115px;width:1px;height:23px;background:#e9e9e9;"></div><div style="left:749px;top:115px;width:1px;height:23px;background:#e9e9e9;"></div><div style="left:988px;top:115px;width:1px;height:23px;background:#e9e9e9;"></div><div style="left:1118px;top:115px;width:1px;height:23px;background:#e9e9e9;"></div><div style="left:1391px;top:115px;width:1px;height:23px;background:#e9e9e9;"></div><div style="left:1508px;top:115px;width:1px;height:23px;background:#e9e9e9;"></div><div style="left:1638px;top:115px;width:1px;height:23px;background:#e9e9e9;"></div><div style="left:517px;top:115px;width:64px;height:22px;background:#e3e3e3;"></div><div style="left:581px;top:115px;width:1px;height:22px;background:#ececec;"></div><div style="left:596px;top:115px;width:83px;height:22px;background:#e3e3e3;"></div><div style="left:988px;top:115px;width:70.5px;height:22px;background:#e3e3e3;"></div><div style="left:1211px;top:115px;width:60px;height:22px;background:#e3e3e3;"></div><div class="t " style="top:120px;left:54.75px;">18</div><div class="t " style="top:120px;left:98.5px;">Zahnspangenbügel</div><div class="t " style="top:120px;left:425.5px;">Apfel Claudia</div><div class="t " style="top:120px;left:520.5px;">Erledigt</div><div style="left:567px;top:120px;width:1px;height:14px;background:#777;"></div><svg style="left:569px;top:126px" width="9" height="5"><polygon points="0.85,0.10 8.35,0.10 4.60,4.30" fill="#8a8a8a"/></svg><div class="t " style="top:120px;left:599.75px;">Hoch</div><div style="left:665px;top:120px;width:1px;height:14px;background:#777;"></div><svg style="left:667px;top:126px" width="9" height="5"><polygon points="0.75,0.10 8.25,0.10 4.50,4.30" fill="#8a8a8a"/></svg><svg style="left:582px;top:116px" width="15" height="21" viewBox="0 0 15 21"><defs><linearGradient id="rg4" x1="0" y1="0" x2="0" y2="1"><stop offset="0" stop-color="#d80000"/><stop offset="1" stop-color="#ff1212"/></linearGradient></defs><path d="M7.5 1.2 L13.2 10.6 L9.6 10.2 L9.6 20 L5.4 20 L5.4 10.2 L1.8 10.6 Z" fill="url(#rg4)"/></svg><div class="t " style="top:120px;left:682.5px;">20.10.2022</div><div class="t " style="top:120px;left:752.75px;">00:00</div><div style="left:825px;top:116px;width:74px;height:21px;background:#5555ff;"></div><div class="t " style="top:120px;left:827.75px;width:66.5px;overflow:hidden;color:#111;">Bestellung Patient</div><svg style="left:894px;top:123px" width="5" height="8"><polygon points="0,0.2 4.4,4 0,7.8" fill="#ff0000"/></svg><div class="t " style="top:120px;left:902.75px;">Hein Caro</div><svg style="left:1018px;top:120px" width="13" height="13" viewBox="0 0 13 13"><rect x="0.5" y="0.5" width="12" height="12" rx="1.6" fill="#0ea8ea" stroke="#76635d" stroke-width="1"/><path d="M2.5 6.9 L6 9.5 L10.6 4.4" fill="none" stroke="#fff" stroke-width="1.7"/></svg><svg style="left:1235px;top:120px" width="13" height="13" viewBox="0 0 13 13"><rect x="0.5" y="0.5" width="12" height="12" rx="1.6" fill="#0ea8ea" stroke="#76635d" stroke-width="1"/><path d="M2.5 6.9 L6 9.5 L10.6 4.4" fill="none" stroke="#fff" stroke-width="1.7"/></svg><div class="t " style="top:120px;right:255.6px;letter-spacing:-0.15px;">Mi;19.10.2022;12:32</div><div class="t " style="top:120px;left:1394px;">Apfel Claudia</div><div class="t " style="top:120px;right:8.2px;letter-spacing:-0.15px;">Mi;19.10.2022;12:29</div><div style="left:0px;top:138px;width:1645px;height:22px;background:#ffffff;"></div><div style="left:51px;top:138px;width:1px;height:23px;background:#e9e9e9;"></div><div style="left:95px;top:138px;width:1px;height:23px;background:#e9e9e9;"></div><div style="left:422px;top:138px;width:1px;height:23px;background:#e9e9e9;"></div><div style="left:749px;top:138px;width:1px;height:23px;background:#e9e9e9;"></div><div style="left:988px;top:138px;width:1px;height:23px;background:#e9e9e9;"></div><div style="left:1118px;top:138px;width:1px;height:23px;background:#e9e9e9;"></div><div style="left:1391px;top:138px;width:1px;height:23px;background:#e9e9e9;"></div><div style="left:1508px;top:138px;width:1px;height:23px;background:#e9e9e9;"></div><div style="left:1638px;top:138px;width:1px;height:23px;background:#e9e9e9;"></div><div style="left:517px;top:138px;width:64px;height:22px;background:#e3e3e3;"></div><div style="left:581px;top:138px;width:1px;height:22px;background:#ececec;"></div><div style="left:596px;top:138px;width:83px;height:22px;background:#e3e3e3;"></div><div style="left:988px;top:138px;width:70.5px;height:22px;background:#e3e3e3;"></div><div style="left:1211px;top:138px;width:60px;height:22px;background:#e3e3e3;"></div><div class="t " style="top:143px;left:54.75px;">14-8</div><div class="t " style="top:143px;left:98.5px;">Monatsabrechnungen erstellen</div><div class="t " style="top:143px;left:425.5px;">Apfel Claudia</div><div class="t " style="top:143px;left:520.5px;">Erledigt</div><div style="left:567px;top:143px;width:1px;height:14px;background:#777;"></div><svg style="left:569px;top:149px" width="9" height="5"><polygon points="0.85,0.10 8.35,0.10 4.60,4.30" fill="#8a8a8a"/></svg><div class="t " style="top:143px;left:599.75px;">Normal</div><div style="left:665px;top:143px;width:1px;height:14px;background:#777;"></div><svg style="left:667px;top:149px" width="9" height="5"><polygon points="0.75,0.10 8.25,0.10 4.50,4.30" fill="#8a8a8a"/></svg><div class="t " style="top:143px;left:682.5px;">20.11.2022</div><div class="t " style="top:143px;left:752.75px;">11:00</div><div style="left:825px;top:139px;width:74px;height:21px;background:#ffff00;"></div><div class="t " style="top:143px;left:827.75px;width:72px;overflow:hidden;color:#111;">Abrechnung</div><svg style="left:1018px;top:143px" width="13" height="13" viewBox="0 0 13 13"><rect x="0.5" y="0.5" width="12" height="12" rx="1.8" fill="#b7b7b7" stroke="#6e6e6e" stroke-width="1"/></svg><svg style="left:1145px;top:136px" width="40" height="26" viewBox="0 0 40 26"><g fill="#0064ff"><path id="sa" d="M11.35 4.2 L8.95 12.4 L17.6 12.4 L16 9.4 C19 6.5 24 4.6 30.2 5.9 C26 2.6 18.5 1.6 13.3 6.6 Z"/><path d="M11.35 4.2 L8.95 12.4 L17.6 12.4 L16 9.4 C19 6.5 24 4.6 30.2 5.9 C26 2.6 18.5 1.6 13.3 6.6 Z" transform="rotate(180 20 12.6)"/></g></svg><svg style="left:1235px;top:143px" width="13" height="13" viewBox="0 0 13 13"><rect x="0.5" y="0.5" width="12" height="12" rx="1.6" fill="#0ea8ea" stroke="#76635d" stroke-width="1"/><path d="M2.5 6.9 L6 9.5 L10.6 4.4" fill="none" stroke="#fff" stroke-width="1.7"/></svg><div class="t " style="top:143px;right:255.6px;letter-spacing:-0.15px;">Mi;02.11.2022;10:03</div><div class="t " style="top:143px;left:1394px;">Apfel Claudia</div><div class="t " style="top:143px;right:8.2px;letter-spacing:-0.15px;">Do;14.04.2022;09:33</div><div style="left:0px;top:161px;width:1645px;height:22px;background:#f2f2f2;"></div><div style="left:51px;top:161px;width:1px;height:23px;background:#e9e9e9;"></div><div style="left:95px;top:161px;width:1px;height:23px;background:#e9e9e9;"></div><div style="left:422px;top:161px;width:1px;height:23px;background:#e9e9e9;"></div><div style="left:749px;top:161px;width:1px;height:23px;background:#e9e9e9;"></div><div style="left:988px;top:161px;width:1px;height:23px;background:#e9e9e9;"></div><div style="left:1118px;top:161px;width:1px;height:23px;background:#e9e9e9;"></div><div style="left:1391px;top:161px;width:1px;height:23px;background:#e9e9e9;"></div><div style="left:1508px;top:161px;width:1px;height:23px;background:#e9e9e9;"></div><div style="left:1638px;top:161px;width:1px;height:23px;background:#e9e9e9;"></div><div style="left:517px;top:161px;width:64px;height:22px;background:#e3e3e3;"></div><div style="left:581px;top:161px;width:1px;height:22px;background:#ececec;"></div><div style="left:596px;top:161px;width:83px;height:22px;background:#e3e3e3;"></div><div style="left:988px;top:161px;width:70.5px;height:22px;background:#e3e3e3;"></div><div style="left:1211px;top:161px;width:60px;height:22px;background:#e3e3e3;"></div><div class="t " style="top:166px;left:54.75px;">15</div><div class="t " style="top:166px;left:98.5px;">Nikolaus</div><div class="t " style="top:166px;left:425.5px;">Apfel Claudia</div><div class="t " style="top:166px;left:520.5px;">Erledigt</div><div style="left:567px;top:166px;width:1px;height:14px;background:#777;"></div><svg style="left:569px;top:172px" width="9" height="5"><polygon points="0.85,0.10 8.35,0.10 4.60,4.30" fill="#8a8a8a"/></svg><div class="t " style="top:166px;left:599.75px;">Normal</div><div style="left:665px;top:166px;width:1px;height:14px;background:#777;"></div><svg style="left:667px;top:172px" width="9" height="5"><polygon points="0.75,0.10 8.25,0.10 4.50,4.30" fill="#8a8a8a"/></svg><div class="t " style="top:166px;left:682.5px;">05.12.2022</div><div class="t " style="top:166px;left:752.75px;">15:00</div><div style="left:825px;top:162px;width:74px;height:21px;background:#00aaff;"></div><div class="t " style="top:166px;left:827.75px;width:72px;overflow:hidden;color:#111;">Privat</div><div class="t " style="top:166px;left:902.75px;">Paulson Emma</div><svg style="left:1018px;top:166px" width="13" height="13" viewBox="0 0 13 13"><rect x="0.5" y="0.5" width="12" height="12" rx="1.8" fill="#b7b7b7" stroke="#6e6e6e" stroke-width="1"/></svg><svg style="left:1235px;top:166px" width="13" height="13" viewBox="0 0 13 13"><rect x="0.5" y="0.5" width="12" height="12" rx="1.6" fill="#0ea8ea" stroke="#76635d" stroke-width="1"/><path d="M2.5 6.9 L6 9.5 L10.6 4.4" fill="none" stroke="#fff" stroke-width="1.7"/></svg><div class="t " style="top:166px;right:255.6px;letter-spacing:-0.15px;">Mi;02.11.2022;10:03</div><div class="t " style="top:166px;left:1394px;">Apfel Claudia</div><div class="t " style="top:166px;right:8.2px;letter-spacing:-0.15px;">Do;14.04.2022;10:45</div><div style="left:0px;top:184px;width:1645px;height:22px;background:#ffffff;"></div><div style="left:51px;top:184px;width:1px;height:23px;background:#e9e9e9;"></div><div style="left:95px;top:184px;width:1px;height:23px;background:#e9e9e9;"></div><div style="left:422px;top:184px;width:1px;height:23px;background:#e9e9e9;"></div><div style="left:749px;top:184px;width:1px;height:23px;background:#e9e9e9;"></div><div style="left:988px;top:184px;width:1px;height:23px;background:#e9e9e9;"></div><div style="left:1118px;top:184px;width:1px;height:23px;background:#e9e9e9;"></div><div style="left:1391px;top:184px;width:1px;height:23px;background:#e9e9e9;"></div><div style="left:1508px;top:184px;width:1px;height:23px;background:#e9e9e9;"></div><div style="left:1638px;top:184px;width:1px;height:23px;background:#e9e9e9;"></div><div style="left:517px;top:184px;width:64px;height:22px;background:#e3e3e3;"></div><div style="left:581px;top:184px;width:1px;height:22px;background:#ececec;"></div><div style="left:596px;top:184px;width:83px;height:22px;background:#e3e3e3;"></div><div style="left:988px;top:184px;width:70.5px;height:22px;background:#e3e3e3;"></div><div style="left:1211px;top:184px;width:60px;height:22px;background:#e3e3e3;"></div><div class="t " style="top:189px;left:54.75px;">14-9</div><div class="t " style="top:189px;left:98.5px;">Monatsabrechnungen erstellen</div><div class="t " style="top:189px;left:425.5px;">Apfel Claudia</div><div class="t " style="top:189px;left:520.5px;">Erledigt</div><div style="left:567px;top:189px;width:1px;height:14px;background:#777;"></div><svg style="left:569px;top:195px" width="9" height="5"><polygon points="0.85,0.10 8.35,0.10 4.60,4.30" fill="#8a8a8a"/></svg><div class="t " style="top:189px;left:599.75px;">Normal</div><div style="left:665px;top:189px;width:1px;height:14px;background:#777;"></div><svg style="left:667px;top:195px" width="9" height="5"><polygon points="0.75,0.10 8.25,0.10 4.50,4.30" fill="#8a8a8a"/></svg><div class="t " style="top:189px;left:682.5px;">20.12.2022</div><div class="t " style="top:189px;left:752.75px;">11:00</div><div style="left:825px;top:185px;width:74px;height:21px;background:#ffff00;"></div><div class="t " style="top:189px;left:827.75px;width:72px;overflow:hidden;color:#111;">Abrechnung</div><svg style="left:1018px;top:189px" width="13" height="13" viewBox="0 0 13 13"><rect x="0.5" y="0.5" width="12" height="12" rx="1.8" fill="#b7b7b7" stroke="#6e6e6e" stroke-width="1"/></svg><svg style="left:1145px;top:182px" width="40" height="26" viewBox="0 0 40 26"><g fill="#0064ff"><path id="sa" d="M11.35 4.2 L8.95 12.4 L17.6 12.4 L16 9.4 C19 6.5 24 4.6 30.2 5.9 C26 2.6 18.5 1.6 13.3 6.6 Z"/><path d="M11.35 4.2 L8.95 12.4 L17.6 12.4 L16 9.4 C19 6.5 24 4.6 30.2 5.9 C26 2.6 18.5 1.6 13.3 6.6 Z" transform="rotate(180 20 12.6)"/></g></svg><svg style="left:1235px;top:189px" width="13" height="13" viewBox="0 0 13 13"><rect x="0.5" y="0.5" width="12" height="12" rx="1.6" fill="#0ea8ea" stroke="#76635d" stroke-width="1"/><path d="M2.5 6.9 L6 9.5 L10.6 4.4" fill="none" stroke="#fff" stroke-width="1.7"/></svg><div class="t " style="top:189px;right:255.6px;letter-spacing:-0.15px;">Mi;02.11.2022;10:03</div><div class="t " style="top:189px;left:1394px;">Apfel Claudia</div><div class="t " style="top:189px;right:8.2px;letter-spacing:-0.15px;">Do;14.04.2022;09:33</div><div style="left:0px;top:207px;width:1645px;height:22px;background:#f2f2f2;"></div><div style="left:51px;top:207px;width:1px;height:23px;background:#e9e9e9;"></div><div style="left:95px;top:207px;width:1px;height:23px;background:#e9e9e9;"></div><div style="left:422px;top:207px;width:1px;height:23px;background:#e9e9e9;"></div><div style="left:749px;top:207px;width:1px;height:23px;background:#e9e9e9;"></div><div style="left:988px;top:207px;width:1px;height:23px;background:#e9e9e9;"></div><div style="left:1118px;top:207px;width:1px;height:23px;background:#e9e9e9;"></div><div style="left:1391px;top:207px;width:1px;height:23px;background:#e9e9e9;"></div><div style="left:1508px;top:207px;width:1px;height:23px;background:#e9e9e9;"></div><div style="left:1638px;top:207px;width:1px;height:23px;background:#e9e9e9;"></div><div style="left:517px;top:207px;width:64px;height:22px;background:#e3e3e3;"></div><div style="left:581px;top:207px;width:1px;height:22px;background:#ececec;"></div><div style="left:596px;top:207px;width:83px;height:22px;background:#e3e3e3;"></div><div style="left:988px;top:207px;width:70.5px;height:22px;background:#e3e3e3;"></div><div style="left:1211px;top:207px;width:60px;height:22px;background:#e3e3e3;"></div><div class="t " style="top:212px;left:54.75px;">12-3</div><div class="t " style="top:212px;left:98.5px;">KCH-Quartalsabrechnung</div><div class="t " style="top:212px;left:425.5px;">Apfel Claudia</div><div class="t " style="top:212px;left:520.5px;">Erledigt</div><div style="left:567px;top:212px;width:1px;height:14px;background:#777;"></div><svg style="left:569px;top:218px" width="9" height="5"><polygon points="0.85,0.10 8.35,0.10 4.60,4.30" fill="#8a8a8a"/></svg><div class="t " style="top:212px;left:599.75px;">Normal</div><div style="left:665px;top:212px;width:1px;height:14px;background:#777;"></div><svg style="left:667px;top:218px" width="9" height="5"><polygon points="0.75,0.10 8.25,0.10 4.50,4.30" fill="#8a8a8a"/></svg><div class="t " style="top:212px;left:682.5px;">30.12.2022</div><div class="t " style="top:212px;left:752.75px;">00:00</div><div style="left:825px;top:208px;width:74px;height:21px;background:#ffff00;"></div><div class="t " style="top:212px;left:827.75px;width:72px;overflow:hidden;color:#111;">Abrechnung</div><svg style="left:1018px;top:212px" width="13" height="13" viewBox="0 0 13 13"><rect x="0.5" y="0.5" width="12" height="12" rx="1.8" fill="#b7b7b7" stroke="#6e6e6e" stroke-width="1"/></svg><svg style="left:1145px;top:205px" width="40" height="26" viewBox="0 0 40 26"><g fill="#0064ff"><path id="sa" d="M11.35 4.2 L8.95 12.4 L17.6 12.4 L16 9.4 C19 6.5 24 4.6 30.2 5.9 C26 2.6 18.5 1.6 13.3 6.6 Z"/><path d="M11.35 4.2 L8.95 12.4 L17.6 12.4 L16 9.4 C19 6.5 24 4.6 30.2 5.9 C26 2.6 18.5 1.6 13.3 6.6 Z" transform="rotate(180 20 12.6)"/></g></svg><svg style="left:1235px;top:212px" width="13" height="13" viewBox="0 0 13 13"><rect x="0.5" y="0.5" width="12" height="12" rx="1.6" fill="#0ea8ea" stroke="#76635d" stroke-width="1"/><path d="M2.5 6.9 L6 9.5 L10.6 4.4" fill="none" stroke="#fff" stroke-width="1.7"/></svg><div class="t " style="top:212px;right:255.6px;letter-spacing:-0.15px;">Mi;02.11.2022;10:03</div><div class="t " style="top:212px;left:1394px;">Apfel Claudia</div><div class="t " style="top:212px;right:8.2px;letter-spacing:-0.15px;">Do;14.04.2022;09:02</div><div style="left:0px;top:230px;width:1645px;height:22px;background:#ffffff;"></div><div style="left:51px;top:230px;width:1px;height:23px;background:#e9e9e9;"></div><div style="left:95px;top:230px;width:1px;height:23px;background:#e9e9e9;"></div><div style="left:422px;top:230px;width:1px;height:23px;background:#e9e9e9;"></div><div style="left:749px;top:230px;width:1px;height:23px;background:#e9e9e9;"></div><div style="left:988px;top:230px;width:1px;height:23px;background:#e9e9e9;"></div><div style="left:1118px;top:230px;width:1px;height:23px;background:#e9e9e9;"></div><div style="left:1391px;top:230px;width:1px;height:23px;background:#e9e9e9;"></div><div style="left:1508px;top:230px;width:1px;height:23px;background:#e9e9e9;"></div><div style="left:1638px;top:230px;width:1px;height:23px;background:#e9e9e9;"></div><div style="left:517px;top:230px;width:64px;height:22px;background:#e3e3e3;"></div><div style="left:581px;top:230px;width:1px;height:22px;background:#ececec;"></div><div style="left:596px;top:230px;width:83px;height:22px;background:#e3e3e3;"></div><div style="left:988px;top:230px;width:70.5px;height:22px;background:#e3e3e3;"></div><div style="left:1211px;top:230px;width:60px;height:22px;background:#e3e3e3;"></div><div class="t " style="top:235px;left:54.75px;">14-10</div><div class="t " style="top:235px;left:98.5px;">Monatsabrechnungen erstellen</div><div class="t " style="top:235px;left:425.5px;">Apfel Claudia</div><div class="t " style="top:235px;left:520.5px;">Erledigt</div><div style="left:567px;top:235px;width:1px;height:14px;background:#777;"></div><svg style="left:569px;top:241px" width="9" height="5"><polygon points="0.85,0.10 8.35,0.10 4.60,4.30" fill="#8a8a8a"/></svg><div class="t " style="top:235px;left:599.75px;">Normal</div><div style="left:665px;top:235px;width:1px;height:14px;background:#777;"></div><svg style="left:667px;top:241px" width="9" height="5"><polygon points="0.75,0.10 8.25,0.10 4.50,4.30" fill="#8a8a8a"/></svg><div class="t " style="top:235px;left:682.5px;">20.01.2023</div><div class="t " style="top:235px;left:752.75px;">11:00</div><div style="left:825px;top:231px;width:74px;height:21px;background:#ffff00;"></div><div class="t " style="top:235px;left:827.75px;width:72px;overflow:hidden;color:#111;">Abrechnung</div><svg style="left:1018px;top:235px" width="13" height="13" viewBox="0 0 13 13"><rect x="0.5" y="0.5" width="12" height="12" rx="1.8" fill="#b7b7b7" stroke="#6e6e6e" stroke-width="1"/></svg><svg style="left:1145px;top:228px" width="40" height="26" viewBox="0 0 40 26"><g fill="#0064ff"><path id="sa" d="M11.35 4.2 L8.95 12.4 L17.6 12.4 L16 9.4 C19 6.5 24 4.6 30.2 5.9 C26 2.6 18.5 1.6 13.3 6.6 Z"/><path d="M11.35 4.2 L8.95 12.4 L17.6 12.4 L16 9.4 C19 6.5 24 4.6 30.2 5.9 C26 2.6 18.5 1.6 13.3 6.6 Z" transform="rotate(180 20 12.6)"/></g></svg><svg style="left:1235px;top:235px" width="13" height="13" viewBox="0 0 13 13"><rect x="0.5" y="0.5" width="12" height="12" rx="1.6" fill="#0ea8ea" stroke="#76635d" stroke-width="1"/><path d="M2.5 6.9 L6 9.5 L10.6 4.4" fill="none" stroke="#fff" stroke-width="1.7"/></svg><div class="t " style="top:235px;right:255.6px;letter-spacing:-0.15px;">Mi;02.11.2022;10:03</div><div class="t " style="top:235px;left:1394px;">Apfel Claudia</div><div class="t " style="top:235px;right:8.2px;letter-spacing:-0.15px;">Do;14.04.2022;09:33</div></div>
<div style="left:1893px;top:442.5px;width:15.7px;height:241.5px;background:#f1f1f1;"></div>
<svg style="left:1896px;top:449px" width="10" height="5"><polygon points="4.90,0.05 9.15,4.55 0.65,4.55" fill="#c2c2c2"/></svg>
<div style="left:1896.7px;top:459px;width:9.5px;height:199px;background:#a9a9a9;"></div>
<svg style="left:1896px;top:673px" width="10" height="6"><polygon points="0.65,0.55 9.15,0.55 4.90,5.05" fill="#1a1a1a"/></svg>
<div style="left:248px;top:685.25px;width:1660px;height:5.75px;background:#e8e8e8;"></div>
<div style="left:1061px;top:685.25px;width:32px;height:5.75px;background:#bcbcbc;"></div>
<svg style="left:1071px;top:685px" width="12" height="6"><polygon points="0.00,0.35 11.50,0.35 5.75,5.85" fill="#3a3a3a"/></svg>
<div style="left:249.5px;top:698px;width:3px;height:1px;background:#666;"></div>
<div class="t b" style="top:693px;left:256.25px;color:#5b5b5b;">Details zur Aufgabe</div>
<div style="left:378.75px;top:698px;width:1526.25px;height:1.2px;background:#5a5a5a;"></div>
<div style="left:251px;top:714px;width:58.5px;height:28px;background:#0ea8ea;border-radius:5px;"></div>
<div class="t b w" style="top:720px;left:80.4px;width:400px;text-align:center;">Neu</div>
<div class="t " style="top:720px;left:314.5px;">Erstelldatum</div>
<div style="left:387px;top:714px;width:91.5px;height:26.6px;background:#fff;border:1px solid #e1e1e1;border-radius:4px;box-sizing:border-box;"></div>
<div style="left:464.5px;top:717px;width:1px;height:20.6px;background:#777;"></div>
<svg style="left:467px;top:726px" width="9" height="5"><polygon points="0.75,0.70 8.25,0.70 4.50,4.90" fill="#8a8a8a"/></svg>
<div class="t " style="top:720px;left:398px;">14.04.2022</div>
<div class="t " style="top:720px;left:484.25px;">von</div>
<div style="left:506.25px;top:714px;width:788.5px;height:26.6px;background:#fff;border:1px solid #e1e1e1;border-radius:4px;box-sizing:border-box;"></div>
<div class="t " style="top:720px;left:510.5px;">Systeme LinuDent</div>
<div style="left:1297.3px;top:714.3px;width:72.5px;height:27.3px;background:#fff;border:2px solid #a9a9a9;border-radius:5px;box-sizing:border-box;"></div>
<div class="t " style="top:721px;left:1133.5px;width:400px;text-align:center;">Serie</div>
<div style="left:1374px;top:714px;width:22px;height:27.8px;background:#fff;border:2px solid #0ea8ea;border-radius:5px;box-sizing:border-box;"></div>
<svg style="left:1376px;top:719px" width="18" height="18" viewBox="0 0 18 18"><circle cx="9" cy="9" r="8" fill="#0ea8ea"/><rect x="7.9" y="7.2" width="2.2" height="6.6" fill="#fff"/><circle cx="9" cy="4.9" r="1.35" fill="#fff"/></svg>
<div class="t " style="top:720px;left:1660.4px;">Fällig am</div>
<div style="left:1715.3px;top:714px;width:32.7px;height:26.5px;background:#fff;border:1px solid #e1e1e1;border-radius:4px;box-sizing:border-box;"></div>
<div class="t " style="top:720px;left:1719.4px;">Do.</div>
<div style="left:1751px;top:714px;width:91px;height:26.5px;background:#fff;border:1px solid #e1e1e1;border-radius:4px;box-sizing:border-box;"></div>
<div style="left:1828px;top:717px;width:1px;height:20.5px;background:#777;"></div>
<svg style="left:1831px;top:726px" width="8" height="5"><polygon points="0.25,0.65 7.75,0.65 4.00,4.85" fill="#8a8a8a"/></svg>
<div class="t " style="top:720px;left:1762.5px;">14.04.2022</div>
<div style="left:1845.3px;top:714px;width:60.1px;height:26.5px;background:#fff;border:1px solid #e1e1e1;border-radius:4px;box-sizing:border-box;"></div>
<div style="left:1892.4px;top:717px;width:1px;height:20.5px;background:#777;"></div>
<svg style="left:1895px;top:720px" width="8" height="5"><polygon points="3.85,0.05 7.65,4.45 0.05,4.45" fill="#9a9a9a"/></svg>
<svg style="left:1895px;top:730px" width="8" height="5"><polygon points="0.05,0.35 7.65,0.35 3.85,4.75" fill="#9a9a9a"/></svg>
<div class="t " style="top:720px;right:26.6px;">18:00</div>
<div class="t " style="top:753px;left:253.75px;">Zuständig</div>
<div style="left:311.25px;top:747px;width:609.75px;height:26.4px;background:#e4e5e7;border-radius:4px;"></div>
<div style="left:904.25px;top:750px;width:1px;height:20.4px;background:#777;"></div>
<div class="t sm" style="top:753px;left:713.275px;width:400px;text-align:center;color:#777;">...</div>
<div class="t " style="top:753px;left:315.5px;">Apfel Claudia</div>
<div class="t " style="top:753px;left:926.25px;">erledigt am</div>
<div style="left:990.25px;top:747px;width:91.25px;height:26.4px;background:#e4e5e7;border-radius:4px;"></div>
<div style="left:1067.25px;top:750px;width:1px;height:20.4px;background:#777;"></div>
<svg style="left:1070px;top:759px" width="9" height="5"><polygon points="0.62,0.60 8.12,0.60 4.38,4.80" fill="#8a8a8a"/></svg>
<div class="t " style="top:753px;left:1001px;">14.04.2022</div>
<div style="left:1084.25px;top:747px;width:60.5px;height:26.4px;background:#e4e5e7;border-radius:4px;"></div>
<div style="left:1131.25px;top:750px;width:1px;height:20.4px;background:#777;"></div>
<svg style="left:1134px;top:753px" width="8" height="5"><polygon points="3.95,0.00 7.75,4.40 0.15,4.40" fill="#9a9a9a"/></svg>
<svg style="left:1134px;top:763px" width="8" height="5"><polygon points="0.15,0.30 7.75,0.30 3.95,4.70" fill="#9a9a9a"/></svg>
<div class="t " style="top:753px;right:787.25px;">09:01</div>
<div class="t " style="top:753px;left:1299.8px;">Erinnerung</div>
<div style="left:1364px;top:752px;width:22px;height:18.1px;background:#0ea8ea;border-radius:5px;"></div>
<svg style="left:1364px;top:752px" width="22" height="18" viewBox="0 0 22 18"><path d="M3.06 6.6 H5.8 L10.9 3.2 V14.7 L5.8 11.7 H3.06 Z" fill="#fff"/><path d="M12.4 5.4 Q14.6 9 12.4 12.6 M14.8 4.1 Q17.8 9 14.8 13.9 M17.2 3.2 Q20.8 9 17.2 14.8" fill="none" stroke="#c6ebfb" stroke-width="1.1"/></svg>
<svg style="left:1391.5px;top:751.5px" width="19" height="19" viewBox="0 0 19 19"><g fill="none" stroke="#0ea8ea" stroke-width="1.15"><circle cx="9.5" cy="10.2" r="6.9"/><path d="M9.7 5.6 V10.2 H6"/><path d="M1.5 4.2 A2.6 2.6 0 0 1 5.6 1.6 M17.5 4.2 A2.6 2.6 0 0 0 13.4 1.6"/><path d="M4.6 15.6 L2.8 17.8 M14.4 15.6 L16.2 17.8"/><path d="M0.8 2.2 L18 12.6" stroke-width="1.4"/></g></svg>
<div style="left:1415.5px;top:747px;width:332.5px;height:26.4px;background:#e4e5e7;border-radius:4px;"></div>
<div style="left:1733.9px;top:750px;width:1px;height:20.4px;background:#777;"></div>
<svg style="left:1737px;top:759px" width="8" height="5"><polygon points="0.20,0.60 7.70,0.60 3.95,4.80" fill="#8a8a8a"/></svg>
<div class="t " style="top:753px;left:1419.75px;">Ohne</div>
<div style="left:1751px;top:747px;width:91px;height:26.4px;background:#fff;border:1px solid #e1e1e1;border-radius:4px;box-sizing:border-box;"></div>
<div style="left:1828px;top:750px;width:1px;height:20.4px;background:#777;"></div>
<svg style="left:1831px;top:759px" width="8" height="5"><polygon points="0.25,0.60 7.75,0.60 4.00,4.80" fill="#8a8a8a"/></svg>
<div class="t " style="top:753px;left:1762.5px;">00.00.0000</div>
<div style="left:1845.3px;top:747px;width:60.1px;height:26.4px;background:#fff;border:1px solid #e1e1e1;border-radius:4px;box-sizing:border-box;"></div>
<div style="left:1892.4px;top:750px;width:1px;height:20.4px;background:#777;"></div>
<svg style="left:1895px;top:753px" width="8" height="5"><polygon points="3.85,0.00 7.65,4.40 0.05,4.40" fill="#9a9a9a"/></svg>
<svg style="left:1895px;top:763px" width="8" height="5"><polygon points="0.05,0.30 7.65,0.30 3.85,4.70" fill="#9a9a9a"/></svg>
<div class="t " style="top:753px;right:26.6px;">00:00</div>
<div class="t " style="top:784px;left:253px;">Kategorie</div>
<div style="left:311.25px;top:778.5px;width:609.75px;height:26px;background:#e4e5e7;border-radius:4px;"></div>
<div style="left:904.25px;top:781.5px;width:1px;height:20px;background:#777;"></div>
<div class="t sm" style="top:784px;left:713.275px;width:400px;text-align:center;color:#777;">...</div>
<div style="left:312px;top:779px;width:592px;height:25px;background:#5555ff;border-radius:3px 0 0 3px;"></div>
<div class="t " style="top:784px;left:315.5px;">Bestellung Patient</div>
<div class="t " style="top:784px;left:926.25px;">Priorität</div>
<div style="left:990px;top:778px;width:304.5px;height:26.5px;background:#e4e5e7;border-radius:4px;"></div>
<div style="left:1280.2px;top:781px;width:1px;height:20.5px;background:#777;"></div>
<svg style="left:1283px;top:790px" width="9" height="5"><polygon points="0.60,0.65 8.10,0.65 4.35,4.85" fill="#8a8a8a"/></svg>
<div class="t " style="top:784px;left:994.25px;">Normal</div>
<div style="left:1296px;top:803.8px;width:609.7px;height:1.8px;background:#0ea8ea;"></div>
<div style="left:1296px;top:779px;width:304.5px;height:26.6px;background:#0ea8ea;border-radius:3px 3px 0 0;"></div>
<div style="left:1600.5px;top:781.6px;width:305.2px;height:22.2px;background:#b1b1b4;border-radius:3px 3px 0 0;border-left:1px solid #98989b;box-sizing:border-box;"></div>
<div class="t b w" style="top:784px;left:1248px;width:400px;text-align:center;">Serie</div>
<div class="t b" style="top:785px;left:1553.3px;width:400px;text-align:center;color:#f1f1f1;">Anlagen</div>
<div class="t " style="top:812px;left:253px;">Patient</div>
<div style="left:311.25px;top:806.3px;width:609.75px;height:26.5px;background:#e4e5e7;border-radius:4px;"></div>
<div style="left:904.25px;top:809.3px;width:1px;height:20.5px;background:#777;"></div>
<div class="t sm" style="top:812px;left:713.275px;width:400px;text-align:center;color:#777;">...</div>
<div class="t " style="top:812px;left:315.5px;">Zentro Ralf</div>
<div class="t " style="top:812px;left:926.25px;">Status</div>
<div style="left:990px;top:806.3px;width:304.5px;height:26.5px;background:#e4e5e7;border-radius:4px;"></div>
<div style="left:1280.2px;top:809.3px;width:1px;height:20.5px;background:#777;"></div>
<svg style="left:1283px;top:818px" width="9" height="6"><polygon points="0.60,0.95 8.10,0.95 4.35,5.15" fill="#8a8a8a"/></svg>
<div class="t " style="top:812px;left:994.25px;">Erledigt</div>
<div class="t " style="top:840px;left:253px;">Betreff</div>
<div style="left:311.25px;top:834.6px;width:983.25px;height:26px;background:#e4e5e7;border-radius:4px;"></div>
<div class="t " style="top:840px;left:315.5px;">Planung der Zahnversorgung</div>
<div class="t " style="top:863px;left:253px;">Text</div>
<div style="left:311px;top:862px;width:983.5px;height:163px;background:#e4e5e7;border-radius:4px;"></div>
<div class="t " style="top:868px;left:316px;">Hallo Claudia, bitte mit dem Patienten im April einen Termin vereinbaren, damit die mögliche ZE-Versorgung besprochen und geplant werden kann.</div>
<div style="left:1298px;top:812.25px;width:3px;height:1px;background:#666;"></div>
<div class="t b" style="top:807px;left:1305.4px;color:#5b5b5b;">Serienmuster</div>
<div style="left:1391px;top:812.25px;width:511px;height:1.2px;background:#5a5a5a;"></div>
<div style="left:1340.3px;top:831.5px;width:15px;height:15px;background:#f2f2f2;border:1.2px solid #c2c2c2;border-radius:50%;box-sizing:border-box;"></div>
<div style="left:1343.8px;top:835px;width:8px;height:8px;background:#bdbdbd;border-radius:50%;"></div>
<div style="left:1340.3px;top:860.5px;width:15px;height:15px;background:#fff;border:1.2px solid #cfcfcf;border-radius:50%;box-sizing:border-box;"></div>
<div style="left:1340.3px;top:889.5px;width:15px;height:15px;background:#fff;border:1.2px solid #cfcfcf;border-radius:50%;box-sizing:border-box;"></div>
<div style="left:1340.3px;top:918.5px;width:15px;height:15px;background:#fff;border:1.2px solid #cfcfcf;border-radius:50%;box-sizing:border-box;"></div>
<div class="t " style="top:831px;left:1386px;">Tag / Woche</div>
<div class="t " style="top:860px;left:1386px;">Monat</div>
<div class="t " style="top:889px;left:1386px;">Quartal</div>
<div class="t " style="top:918px;left:1386px;">Jahr</div>
<div class="t " style="top:831px;left:1459.2px;">Mo.</div>
<div style="left:1482.4px;top:832.3px;width:12.3px;height:12.4px;background:#fff;border:1px solid #c4c4c4;border-radius:2.5px;box-sizing:border-box;"></div>
<div class="t " style="top:831px;left:1527.3px;">Di.</div>
<div style="left:1545px;top:832.3px;width:12.3px;height:12.4px;background:#fff;border:1px solid #c4c4c4;border-radius:2.5px;box-sizing:border-box;"></div>
<div class="t " style="top:831px;left:1589px;">Mi.</div>
<div style="left:1608.8px;top:832.3px;width:12.3px;height:12.4px;background:#fff;border:1px solid #c4c4c4;border-radius:2.5px;box-sizing:border-box;"></div>
<div class="t " style="top:831px;left:1653.5px;">Do.</div>
<div style="left:1674.4px;top:832.3px;width:12.3px;height:12.4px;background:#fff;border:1px solid #c4c4c4;border-radius:2.5px;box-sizing:border-box;"></div>
<div class="t " style="top:831px;left:1719px;">Fr.</div>
<div style="left:1736px;top:832.3px;width:12.3px;height:12.4px;background:#fff;border:1px solid #c4c4c4;border-radius:2.5px;box-sizing:border-box;"></div>
<div class="t " style="top:831px;left:1780px;">Sa.</div>
<div style="left:1799.8px;top:832.3px;width:12.3px;height:12.4px;background:#fff;border:1px solid #c4c4c4;border-radius:2.5px;box-sizing:border-box;"></div>
<div class="t " style="top:831px;left:1844.4px;">So.</div>
<div style="left:1863.6px;top:832.3px;width:12.3px;height:12.4px;background:#fff;border:1px solid #c4c4c4;border-radius:2.5px;box-sizing:border-box;"></div>
<div class="t " style="top:860px;left:1458.7px;">Jeden</div>
<div class="t " style="top:889px;left:1458.7px;">Am</div>
<div class="t " style="top:918px;left:1458.7px;">Jeden</div>
<div style="left:1524px;top:854px;width:44px;height:26px;background:#fff;border:1px solid #e1e1e1;border-radius:4px;box-sizing:border-box;"></div>
<div style="left:1555px;top:857px;width:1px;height:20px;background:#777;"></div>
<svg style="left:1557px;top:859px" width="9" height="6"><polygon points="4.45,0.80 8.25,5.20 0.65,5.20" fill="#9a9a9a"/></svg>
<svg style="left:1557px;top:870px" width="9" height="5"><polygon points="0.65,0.10 8.25,0.10 4.45,4.50" fill="#9a9a9a"/></svg>
<div class="t " style="top:860px;right:364.5px;">0</div>
<div style="left:1524px;top:883px;width:44px;height:26.4px;background:#fff;border:1px solid #e1e1e1;border-radius:4px;box-sizing:border-box;"></div>
<div style="left:1555px;top:886px;width:1px;height:20.4px;background:#777;"></div>
<svg style="left:1557px;top:889px" width="9" height="5"><polygon points="4.45,0.00 8.25,4.40 0.65,4.40" fill="#9a9a9a"/></svg>
<svg style="left:1557px;top:899px" width="9" height="5"><polygon points="0.65,0.30 8.25,0.30 4.45,4.70" fill="#9a9a9a"/></svg>
<div class="t " style="top:889px;right:364.5px;">00</div>
<div style="left:1524px;top:912px;width:44px;height:26.4px;background:#fff;border:1px solid #e1e1e1;border-radius:4px;box-sizing:border-box;"></div>
<div style="left:1555px;top:915px;width:1px;height:20.4px;background:#777;"></div>
<svg style="left:1557px;top:918px" width="9" height="5"><polygon points="4.45,0.00 8.25,4.40 0.65,4.40" fill="#9a9a9a"/></svg>
<svg style="left:1557px;top:928px" width="9" height="5"><polygon points="0.65,0.30 8.25,0.30 4.45,4.70" fill="#9a9a9a"/></svg>
<div class="t " style="top:918px;right:364.5px;">00</div>
<div class="t " style="top:860px;left:1589px;">Tag im Monat</div>
<div class="t " style="top:889px;left:1589px;">Tag vor Quartalsende</div>
<div style="left:1586px;top:912px;width:100px;height:26.4px;background:#fff;border:1px solid #e1e1e1;border-radius:4px;box-sizing:border-box;"></div>
<div style="left:1671.25px;top:915px;width:1px;height:20.4px;background:#b0b0b0;"></div>
<svg style="left:1674px;top:924px" width="9" height="5"><polygon points="0.88,0.60 8.38,0.60 4.62,4.80" fill="#c0c0c0"/></svg>
<div class="t " style="top:918px;left:1590px;">Januar</div>
<div style="left:1298px;top:977.95px;width:3px;height:1px;background:#666;"></div>
<div class="t b" style="top:973px;left:1305.4px;color:#5b5b5b;">Seriendauer</div>
<div style="left:1383px;top:977.95px;width:519px;height:1.2px;background:#5a5a5a;"></div>
<div class="t " style="top:999px;left:1301px;">Beginn</div>
<div style="left:1347px;top:993px;width:33.4px;height:26.5px;background:#fff;border:1px solid #e1e1e1;border-radius:4px;box-sizing:border-box;"></div>
<div style="left:1382px;top:993px;width:91.4px;height:26.5px;background:#fff;border:1px solid #e1e1e1;border-radius:4px;box-sizing:border-box;"></div>
<div style="left:1459.1px;top:996px;width:1px;height:20.5px;background:#777;"></div>
<svg style="left:1462px;top:1005px" width="8" height="5"><polygon points="0.50,0.65 8.00,0.65 4.25,4.85" fill="#8a8a8a"/></svg>
<div class="t " style="top:999px;left:1392.6px;">00.00.0000</div>
<div class="t " style="top:999px;left:1610.6px;">Ende</div>
<div style="left:1645px;top:993px;width:33.4px;height:26.5px;background:#fff;border:1px solid #e1e1e1;border-radius:4px;box-sizing:border-box;"></div>
<div style="left:1680px;top:993px;width:91.6px;height:26.5px;background:#fff;border:1px solid #e1e1e1;border-radius:4px;box-sizing:border-box;"></div>
<div style="left:1757.4px;top:996px;width:1px;height:20.5px;background:#777;"></div>
<svg style="left:1760px;top:1005px" width="9" height="5"><polygon points="0.75,0.65 8.25,0.65 4.50,4.85" fill="#8a8a8a"/></svg>
<div class="t " style="top:999px;left:1691.3px;">00.00.0000</div>
</body></html>
